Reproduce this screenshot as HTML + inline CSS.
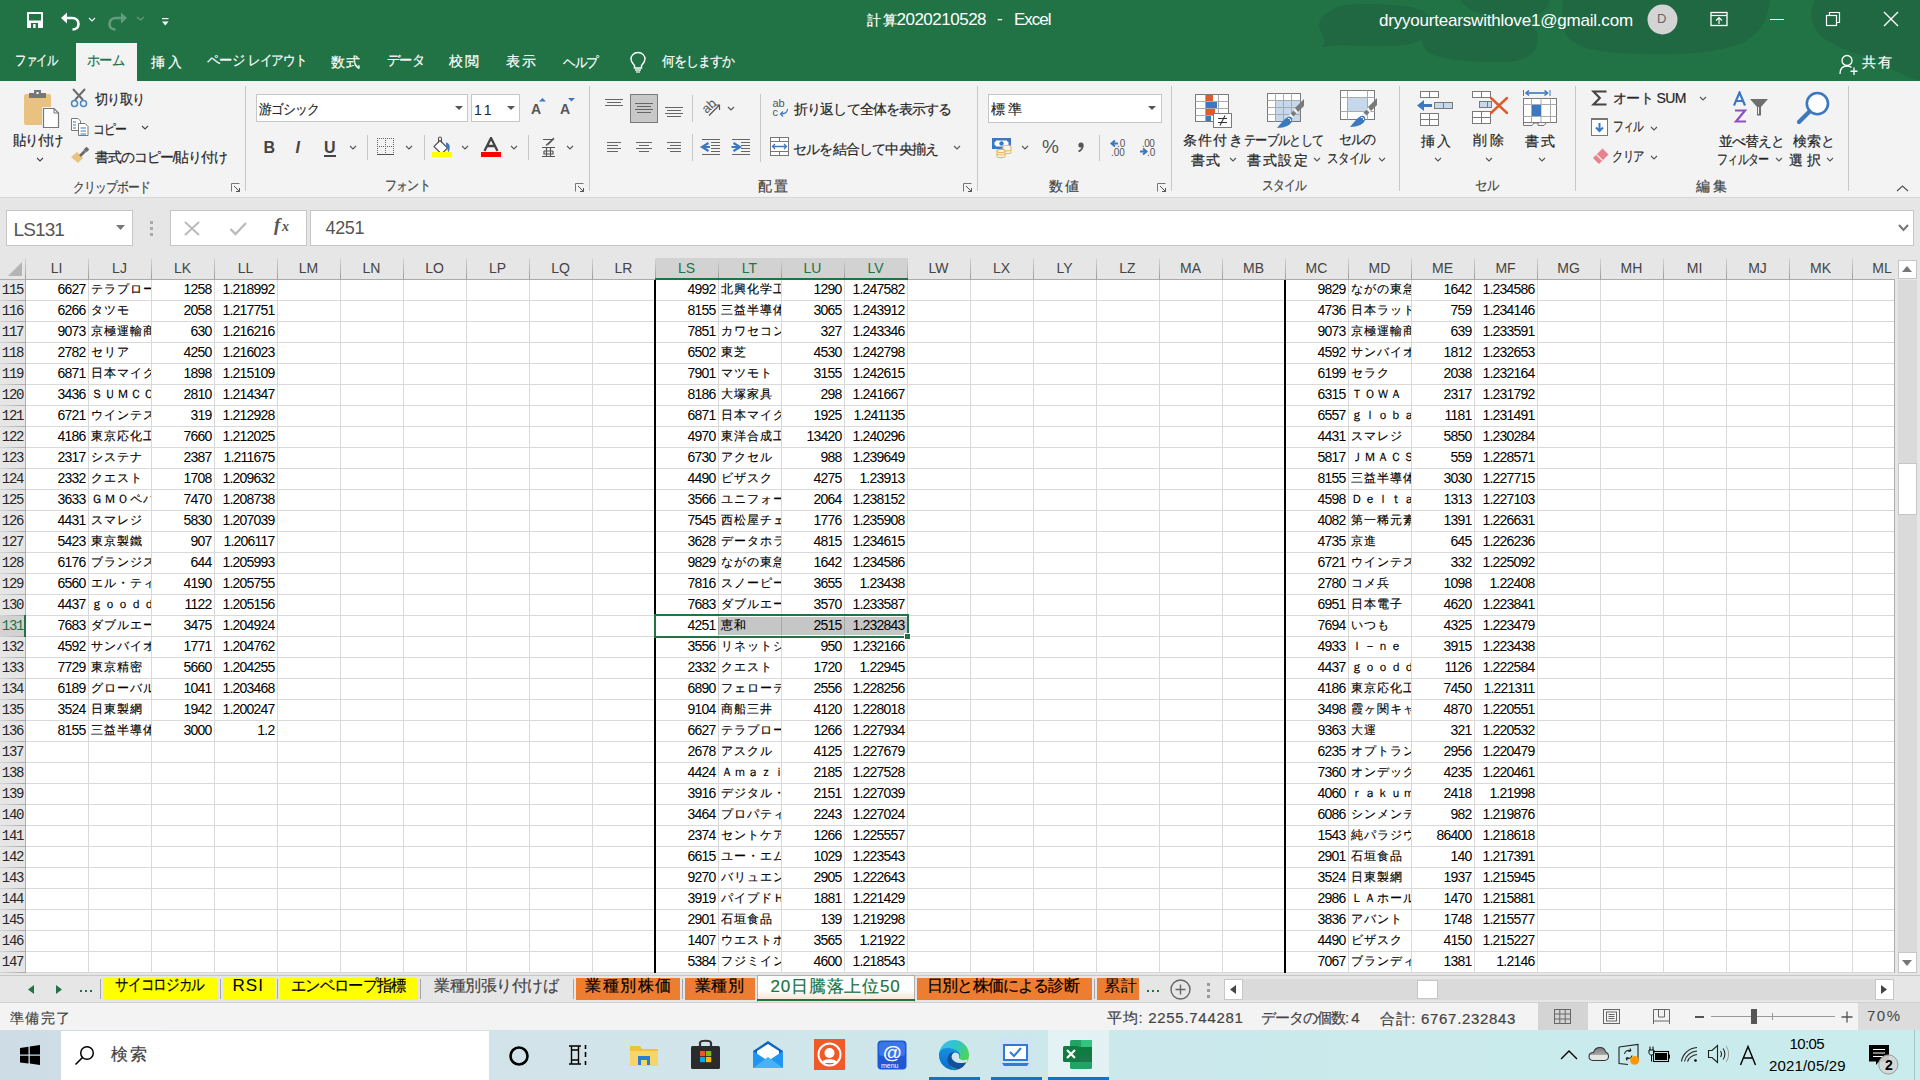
<!DOCTYPE html>
<html><head><meta charset='utf-8'><title>Excel</title>
<style>
html,body{margin:0;padding:0;width:1920px;height:1080px;overflow:hidden;background:#fff;font-family:"Liberation Sans",sans-serif;}
.c{position:absolute;white-space:nowrap;overflow:hidden;font-family:"Liberation Sans",sans-serif;}
</style></head><body>
<div style='position:absolute;left:0px;top:0px;width:1920px;height:81px;background:#217346'></div><svg style='position:absolute;left:1300px;top:0px;' width='620' height='81' viewBox='0 0 620 81'><g fill='#1f6842'><path d='M30,12 C35,4 60,3 90,5 C115,6 128,10 130,20 C132,32 125,42 105,45 C85,47 55,46 40,45 L22,47 C26,42 24,36 20,30 C17,22 22,15 30,12Z'/><path d='M125,25 C130,18 160,17 200,19 C228,21 240,28 238,40 C236,55 225,62 200,62 C170,62 140,60 128,52 C120,45 120,33 125,25Z'/><path d='M263,0 H470 C468,20 460,35 440,44 C410,55 360,56 320,53 C290,51 268,45 264,30 C262,20 262,8 263,0Z'/><path d='M160,0 H250 C248,10 240,16 220,17 C195,18 170,15 160,0Z'/><path d='M515,0 H620 V81 C600,75 580,62 560,55 C530,45 515,35 512,20 C511,12 512,5 515,0Z'/></g></svg><svg style='position:absolute;left:26px;top:11px;' width='18' height='18' viewBox='0 0 18 18'><rect x='1' y='1' width='16' height='16' rx='0.8' fill='#fff'/><rect x='3' y='3' width='12' height='6.5' fill='#217346'/><rect x='5' y='12' width='7' height='5' fill='#217346'/><rect x='7.2' y='13' width='2.4' height='4' fill='#fff'/></svg><svg style='position:absolute;left:59px;top:11px;' width='22' height='20' viewBox='0 0 22 20'><path d='M2,7 L8,1.5 V12.5Z' fill='#fff'/><path d='M7,7 H13 C17,7 19.5,9.5 19.5,13 C19.5,16.5 17,18.5 13.5,18.5' fill='none' stroke='#fff' stroke-width='2.6'/></svg><svg style='position:absolute;left:88.0px;top:17.0px;' width='8' height='5' viewBox='0 0 8 5'><polyline points='1,1 4.0,4 7,1' fill='none' stroke='#fff' stroke-width='1.1'/></svg><svg style='position:absolute;left:107px;top:11px;opacity:0.3' width='22' height='20' viewBox='0 0 22 20'><path d='M20,7 L14,1.5 V12.5Z' fill='#fff'/><path d='M15,7 H9 C5,7 2.5,9.5 2.5,13 C2.5,16.5 5,18.5 8.5,18.5' fill='none' stroke='#fff' stroke-width='2.6'/></svg><svg style='position:absolute;left:136px;top:16px;opacity:0.3' width='9' height='6' viewBox='0 0 9 6'><polyline points='1,1 4.5,4 8,1' fill='none' stroke='#fff' stroke-width='1.1'/></svg><svg style='position:absolute;left:161px;top:17px;' width='9' height='10' viewBox='0 0 9 10'><rect x='1' y='1' width='6.5' height='1.2' fill='#fff'/><path d='M1,4.5 H7.5 L4.25,8.5Z' fill='#fff'/></svg><svg style='position:absolute;left:1647px;top:4px;' width='31' height='31' viewBox='0 0 31 31'><circle cx='15.5' cy='15.5' r='15' fill='#d4d4d4'/></svg><svg style='position:absolute;left:1710px;top:11px;' width='19' height='16' viewBox='0 0 19 16'><rect x='1' y='1.5' width='16' height='13' fill='none' stroke='#fff' stroke-width='1.3'/><line x1='1' y1='4.5' x2='17' y2='4.5' stroke='#fff' stroke-width='1.2'/><path d='M9,6.5 V13 M6,9.5 L9,6.5 L12,9.5' fill='none' stroke='#fff' stroke-width='1.2'/></svg><div style='position:absolute;left:1770px;top:19px;width:14px;height:1px;background:#fff'></div><svg style='position:absolute;left:1825px;top:11px;' width='17' height='17' viewBox='0 0 17 17'><rect x='1.5' y='4.5' width='10' height='10' fill='none' stroke='#fff' stroke-width='1.2'/><path d='M4.5,4.5 V1.5 H14.5 V11.5 H11.5' fill='none' stroke='#fff' stroke-width='1.2'/></svg><svg style='position:absolute;left:1883px;top:11px;' width='16' height='16' viewBox='0 0 16 16'><path d='M1,1 L15,15 M15,1 L1,15' stroke='#fff' stroke-width='1.4'/></svg><div style='position:absolute;left:76px;top:43px;width:61px;height:38px;background:#f3f3f3'></div><svg style='position:absolute;left:629px;top:51px;' width='18' height='22' viewBox='0 0 18 22'><path d='M9,1.5 C4.5,1.5 2,5 2,8 C2,11 4,12.5 5.5,14.5 V17 H12.5 V14.5 C14,12.5 16,11 16,8 C16,5 13.5,1.5 9,1.5Z' fill='none' stroke='#fff' stroke-width='1.4'/><line x1='6' y1='19' x2='12' y2='19' stroke='#fff' stroke-width='1.4'/><line x1='7' y1='21' x2='11' y2='21' stroke='#fff' stroke-width='1.2'/></svg><svg style='position:absolute;left:1839px;top:54px;' width='20' height='22' viewBox='0 0 20 22'><circle cx='8' cy='6.5' r='5' fill='none' stroke='#fff' stroke-width='1.3'/><path d='M1,20 C1,14 4,12 8,12 C10,12 11.5,12.5 12.5,13.5' fill='none' stroke='#fff' stroke-width='1.3'/><path d='M15,13.5 V21 M11.5,17.25 H18.5' stroke='#fff' stroke-width='1.3'/></svg><div style='position:absolute;left:0px;top:81px;width:1920px;height:116px;background:#f3f3f3'></div><div style='position:absolute;left:0px;top:197px;width:1920px;height:1px;background:#d6d6d6'></div><div style='position:absolute;left:245px;top:86px;width:1px;height:105px;background:#c8c8c8'></div><div style='position:absolute;left:589px;top:86px;width:1px;height:105px;background:#c8c8c8'></div><div style='position:absolute;left:977px;top:86px;width:1px;height:105px;background:#c8c8c8'></div><div style='position:absolute;left:1171px;top:86px;width:1px;height:105px;background:#c8c8c8'></div><div style='position:absolute;left:1399px;top:86px;width:1px;height:105px;background:#c8c8c8'></div><div style='position:absolute;left:1575px;top:86px;width:1px;height:105px;background:#c8c8c8'></div><div style='position:absolute;left:1848px;top:86px;width:1px;height:105px;background:#c8c8c8'></div><svg style='position:absolute;left:231px;top:183px;' width='10' height='9' viewBox='0 0 10 9'><path d='M0.5,8.5 V0.5 H8.5' fill='none' stroke='#777' stroke-width='1'/><path d='M3,3 L8.5,8.5 M5,8.5 H8.5 V5' fill='none' stroke='#555' stroke-width='1'/></svg><svg style='position:absolute;left:575px;top:183px;' width='10' height='9' viewBox='0 0 10 9'><path d='M0.5,8.5 V0.5 H8.5' fill='none' stroke='#777' stroke-width='1'/><path d='M3,3 L8.5,8.5 M5,8.5 H8.5 V5' fill='none' stroke='#555' stroke-width='1'/></svg><svg style='position:absolute;left:963px;top:183px;' width='10' height='9' viewBox='0 0 10 9'><path d='M0.5,8.5 V0.5 H8.5' fill='none' stroke='#777' stroke-width='1'/><path d='M3,3 L8.5,8.5 M5,8.5 H8.5 V5' fill='none' stroke='#555' stroke-width='1'/></svg><svg style='position:absolute;left:1157px;top:183px;' width='10' height='9' viewBox='0 0 10 9'><path d='M0.5,8.5 V0.5 H8.5' fill='none' stroke='#777' stroke-width='1'/><path d='M3,3 L8.5,8.5 M5,8.5 H8.5 V5' fill='none' stroke='#555' stroke-width='1'/></svg><svg style='position:absolute;left:1896px;top:185px;' width='13' height='7' viewBox='0 0 13 7'><polyline points='1,6 6.5,1 12,6' fill='none' stroke='#555' stroke-width='1.2'/></svg><svg style='position:absolute;left:23px;top:89px;' width='37' height='40' viewBox='0 0 37 40'><rect x='1' y='5' width='27' height='31' rx='2' fill='#eac27f'/><rect x='6' y='4' width='17' height='5' fill='#777'/><rect x='11' y='1' width='7' height='5' fill='#777'/><rect x='13.5' y='3' width='2' height='2' fill='#fff'/><rect x='19' y='18' width='18' height='21' fill='#f3f3f3'/><path d='M20.5,19.5 H31 L35.5,24 V38.5 H20.5Z' fill='#fff' stroke='#777' stroke-width='1.2'/><path d='M31,19.5 V24 H35.5' fill='none' stroke='#777' stroke-width='1'/></svg><svg style='position:absolute;left:36.0px;top:156.5px;' width='8' height='5' viewBox='0 0 8 5'><polyline points='1,1 4.0,4 7,1' fill='none' stroke='#444' stroke-width='1.1'/></svg><svg style='position:absolute;left:70px;top:88px;' width='19' height='20' viewBox='0 0 19 20'><path d='M3,1 L13,12 M15,1 L5,12' stroke='#6b6b6b' stroke-width='2'/><circle cx='4.5' cy='15.5' r='3' fill='none' stroke='#4a86c8' stroke-width='1.5'/><circle cx='13.5' cy='15.5' r='3' fill='none' stroke='#4a86c8' stroke-width='1.5'/></svg><svg style='position:absolute;left:70px;top:117px;' width='20' height='20' viewBox='0 0 20 20'><path d='M1.5,1.5 H8 L10.5,4 V13.5 H1.5Z' fill='#fff' stroke='#777' stroke-width='1'/><path d='M8.5,6.5 H15 L18,9.5 V18.5 H8.5Z' fill='#fff' stroke='#777' stroke-width='1'/><path d='M3,5 H6 M3,8 H6 M3,11 H6 M10.5,11 H16 M10.5,14 H16 M10.5,17 H16' stroke='#3c78c0' stroke-width='1'/></svg><svg style='position:absolute;left:140.5px;top:125.0px;' width='8' height='5' viewBox='0 0 8 5'><polyline points='1,1 4.0,4 7,1' fill='none' stroke='#444' stroke-width='1.1'/></svg><svg style='position:absolute;left:70px;top:147px;' width='20' height='18' viewBox='0 0 20 18'><path d='M1,10 L8,16 L13,11 L7,5Z' fill='#eac27f'/><path d='M9,8 L14,3 L16,5 L11,10Z' fill='#6b6b6b'/><rect x='14.5' y='0.5' width='4' height='4' fill='#6b6b6b' transform='rotate(45 16.5 2.5)'/></svg><div style='position:absolute;left:256px;top:94px;width:212px;height:28px;background:#fff;border:1px solid #c6c6c6;box-sizing:border-box'></div><svg style='position:absolute;left:455px;top:106px;' width='8' height='5' viewBox='0 0 8 5'><path d='M0,0 H8 L4,4Z' fill='#555'/></svg><div style='position:absolute;left:471px;top:94px;width:49px;height:28px;background:#fff;border:1px solid #c6c6c6;box-sizing:border-box'></div><svg style='position:absolute;left:507px;top:106px;' width='8' height='5' viewBox='0 0 8 5'><path d='M0,0 H8 L4,4Z' fill='#555'/></svg><svg style='position:absolute;left:539px;top:98px;' width='7' height='4' viewBox='0 0 7 4'><path d='M0,3.5 H7 L3.5,0Z' fill='#3c78c0'/></svg><svg style='position:absolute;left:568px;top:98px;' width='7' height='4' viewBox='0 0 7 4'><path d='M0,0 H7 L3.5,3.5Z' fill='#3c78c0'/></svg><div style='position:absolute;left:367px;top:135px;width:1px;height:25px;background:#c8c8c8'></div><div style='position:absolute;left:424px;top:135px;width:1px;height:25px;background:#c8c8c8'></div><div style='position:absolute;left:528px;top:135px;width:1px;height:25px;background:#c8c8c8'></div><div style='position:absolute;left:324px;top:155px;width:12px;height:1.5px;background:#444'></div><svg style='position:absolute;left:349.0px;top:144.5px;' width='8' height='5' viewBox='0 0 8 5'><polyline points='1,1 4.0,4 7,1' fill='none' stroke='#555' stroke-width='1.1'/></svg><svg style='position:absolute;left:0;top:0' width='600' height='200'><g fill='#666'><rect x='377' y='138' width='1' height='1'/><rect x='377' y='146' width='1' height='1'/><rect x='379' y='138' width='1' height='1'/><rect x='379' y='146' width='1' height='1'/><rect x='381' y='138' width='1' height='1'/><rect x='381' y='146' width='1' height='1'/><rect x='383' y='138' width='1' height='1'/><rect x='383' y='146' width='1' height='1'/><rect x='385' y='138' width='1' height='1'/><rect x='385' y='146' width='1' height='1'/><rect x='387' y='138' width='1' height='1'/><rect x='387' y='146' width='1' height='1'/><rect x='389' y='138' width='1' height='1'/><rect x='389' y='146' width='1' height='1'/><rect x='391' y='138' width='1' height='1'/><rect x='391' y='146' width='1' height='1'/><rect x='393' y='138' width='1' height='1'/><rect x='393' y='146' width='1' height='1'/><rect x='377' y='138' width='1' height='1'/><rect x='385' y='138' width='1' height='1'/><rect x='393' y='138' width='1' height='1'/><rect x='377' y='140' width='1' height='1'/><rect x='385' y='140' width='1' height='1'/><rect x='393' y='140' width='1' height='1'/><rect x='377' y='142' width='1' height='1'/><rect x='385' y='142' width='1' height='1'/><rect x='393' y='142' width='1' height='1'/><rect x='377' y='144' width='1' height='1'/><rect x='385' y='144' width='1' height='1'/><rect x='393' y='144' width='1' height='1'/><rect x='377' y='146' width='1' height='1'/><rect x='385' y='146' width='1' height='1'/><rect x='393' y='146' width='1' height='1'/><rect x='377' y='148' width='1' height='1'/><rect x='385' y='148' width='1' height='1'/><rect x='393' y='148' width='1' height='1'/><rect x='377' y='150' width='1' height='1'/><rect x='385' y='150' width='1' height='1'/><rect x='393' y='150' width='1' height='1'/><rect x='377' y='152' width='1' height='1'/><rect x='385' y='152' width='1' height='1'/><rect x='393' y='152' width='1' height='1'/></g><rect x='377' y='154' width='17' height='1' fill='#555'/></svg><svg style='position:absolute;left:405.0px;top:144.5px;' width='8' height='5' viewBox='0 0 8 5'><polyline points='1,1 4.0,4 7,1' fill='none' stroke='#555' stroke-width='1.1'/></svg><svg style='position:absolute;left:430px;top:135px;' width='24' height='24' viewBox='0 0 24 24'><path d='M10,5.5 L17.5,13 L11.5,19 L4,11.5Z' fill='#fff' stroke='#555' stroke-width='1.1' stroke-linejoin='round'/><path d='M8.5,7.5 V3.5 C8.5,1.5 11.5,1.5 11.5,3.5 V8' fill='none' stroke='#555' stroke-width='1.1'/><path d='M16,7.5 C19,8 20.5,10.5 19.5,14.5 L18.5,17.5 C17.5,15 17,12 16,10Z' fill='#3c78c0'/><rect x='2' y='17' width='20' height='5' fill='#ffff00'/></svg><svg style='position:absolute;left:461.0px;top:144.5px;' width='8' height='5' viewBox='0 0 8 5'><polyline points='1,1 4.0,4 7,1' fill='none' stroke='#555' stroke-width='1.1'/></svg><svg style='position:absolute;left:483px;top:137px;' width='16' height='15' viewBox='0 0 16 15'><path d='M1.5,14 L8,1 L14.5,14 M4,9 H12' fill='none' stroke='#444' stroke-width='2.3' stroke-linejoin='miter'/></svg><div style='position:absolute;left:481px;top:152px;width:20px;height:4.5px;background:#ff0000'></div><svg style='position:absolute;left:510.0px;top:144.5px;' width='8' height='5' viewBox='0 0 8 5'><polyline points='1,1 4.0,4 7,1' fill='none' stroke='#555' stroke-width='1.1'/></svg><svg style='position:absolute;left:540px;top:136px;' width='18' height='22' viewBox='0 0 18 22'><path d='M3,3.5 H13 L8,8.5 M6,9.5 L14,2' fill='none' stroke='#555' stroke-width='1.2'/><path d='M2,11.5 H15 M4,15 H13 M2,20.5 H15 M6.5,11.5 V20.5 M10.5,11.5 V20.5 M4,15 V18 H13 V15' fill='none' stroke='#555' stroke-width='1.2'/></svg><svg style='position:absolute;left:566.0px;top:144.5px;' width='8' height='5' viewBox='0 0 8 5'><polyline points='1,1 4.0,4 7,1' fill='none' stroke='#555' stroke-width='1.1'/></svg><div style='position:absolute;left:630px;top:94px;width:28px;height:29px;background:#c8c8c8;border:1px solid #7a7a7a;box-sizing:border-box'></div><svg style='position:absolute;left:0;top:0' width='1000' height='200'><rect x='605' y='99' width='18' height='1' fill='#666'/><rect x='607' y='102' width='14' height='1' fill='#666'/><rect x='605' y='105' width='18' height='1' fill='#666'/><rect x='635' y='103' width='18' height='1' fill='#666'/><rect x='637' y='106' width='14' height='1' fill='#666'/><rect x='635' y='109' width='18' height='1' fill='#666'/><rect x='637' y='112' width='14' height='1' fill='#666'/><rect x='665' y='107' width='18' height='1' fill='#666'/><rect x='667' y='110' width='14' height='1' fill='#666'/><rect x='665' y='113' width='18' height='1' fill='#666'/><rect x='667' y='116' width='14' height='1' fill='#666'/><rect x='607' y='142' width='14' height='1' fill='#666'/><rect x='607' y='145' width='11' height='1' fill='#666'/><rect x='607' y='148' width='14' height='1' fill='#666'/><rect x='607' y='151' width='11' height='1' fill='#666'/><rect x='636' y='142' width='16' height='1' fill='#666'/><rect x='639' y='145' width='10' height='1' fill='#666'/><rect x='636' y='148' width='16' height='1' fill='#666'/><rect x='639' y='151' width='10' height='1' fill='#666'/><rect x='667' y='142' width='14' height='1' fill='#666'/><rect x='670' y='145' width='11' height='1' fill='#666'/><rect x='667' y='148' width='14' height='1' fill='#666'/><rect x='670' y='151' width='11' height='1' fill='#666'/><rect x='702' y='139' width='18' height='1' fill='#666'/><rect x='711' y='142' width='9' height='1' fill='#666'/><rect x='711' y='145' width='9' height='1' fill='#666'/><rect x='711' y='148' width='9' height='1' fill='#666'/><rect x='711' y='151' width='9' height='1' fill='#666'/><rect x='702' y='154' width='18' height='1' fill='#666'/><rect x='732' y='139' width='18' height='1' fill='#666'/><rect x='741' y='142' width='9' height='1' fill='#666'/><rect x='741' y='145' width='9' height='1' fill='#666'/><rect x='741' y='148' width='9' height='1' fill='#666'/><rect x='741' y='151' width='9' height='1' fill='#666'/><rect x='732' y='154' width='18' height='1' fill='#666'/><path d='M708.5,143 L702,147 L708.5,151 M702.5,147 H710' fill='none' stroke='#3c78c0' stroke-width='2.2' stroke-linejoin='miter'/><path d='M733.5,143 L740,147 L733.5,151 M731.5,147 H739.5' fill='none' stroke='#3c78c0' stroke-width='2.2' stroke-linejoin='miter'/><rect x='692' y='95' width='1' height='27' fill='#c8c8c8'/><rect x='692' y='134' width='1' height='27' fill='#c8c8c8'/><rect x='760' y='94' width='1' height='68' fill='#c8c8c8'/><g transform='rotate(-42 709 105)'><text x='701' y='110' font-size='13' font-family='Liberation Sans' fill='#555'>ab</text></g><path d='M709,115.5 L719.5,105 M714.5,105 H719.5 V110' fill='none' stroke='#555' stroke-width='1.2'/></svg><svg style='position:absolute;left:727.0px;top:106.0px;' width='8' height='5' viewBox='0 0 8 5'><polyline points='1,1 4.0,4 7,1' fill='none' stroke='#555' stroke-width='1.1'/></svg><svg style='position:absolute;left:771px;top:97px;' width='20' height='22' viewBox='0 0 20 22'><text x='1.5' y='10' font-size='11' font-family='Liberation Sans' fill='#555'>ab</text><text x='1.5' y='19' font-size='11' font-family='Liberation Sans' fill='#555'>c</text><path d='M16.5,12 C16.5,16 14,17 9.5,17 M12,14.5 L9.5,17 L12,19.5' fill='none' stroke='#3c78c0' stroke-width='1.2'/></svg><svg style='position:absolute;left:769px;top:136px;' width='21' height='21' viewBox='0 0 21 21'><rect x='1.5' y='1.5' width='18' height='18' fill='#fff' stroke='#777' stroke-width='1'/><path d='M1.5,5.5 H19.5 M1.5,15.5 H19.5 M10.5,1.5 V5.5 M10.5,15.5 V19.5' stroke='#777' stroke-width='1'/><path d='M3.5,10.5 H17.5 M6,8 L3.5,10.5 L6,13 M15,8 L17.5,10.5 L15,13' fill='none' stroke='#3c78c0' stroke-width='1.3'/></svg><svg style='position:absolute;left:953.0px;top:144.5px;' width='8' height='5' viewBox='0 0 8 5'><polyline points='1,1 4.0,4 7,1' fill='none' stroke='#555' stroke-width='1.1'/></svg><div style='position:absolute;left:988px;top:94px;width:174px;height:29px;background:#fff;border:1px solid #c6c6c6;box-sizing:border-box'></div><svg style='position:absolute;left:1148px;top:106px;' width='8' height='5' viewBox='0 0 8 5'><path d='M0,0 H8 L4,4Z' fill='#555'/></svg><svg style='position:absolute;left:990px;top:136px;' width='24' height='24' viewBox='0 0 24 24'><rect x='2' y='2' width='19' height='11' fill='#3c78c0'/><path d='M4.5,6 C6,6 6,4.5 6,4.5 H17 C17,4.5 17,6 18.5,6 V9 C17,9 17,10.5 17,10.5 H6 C6,10.5 6,9 4.5,9Z' fill='#fff'/><circle cx='11.5' cy='7.5' r='2.2' fill='#3c78c0'/><g fill='#f3f3f3' stroke='#e8b866' stroke-width='1.1'><ellipse cx='17' cy='11' rx='4' ry='1.7'/><path d='M13,11 V16.5 C13,18 21,18 21,16.5 V11'/><path d='M13,13.7 C13,15.2 21,15.2 21,13.7' fill='none'/><path d='M7,15 C7,13.5 15,13.5 15,15 V20.5 C15,22 7,22 7,20.5Z'/><ellipse cx='11' cy='15' rx='4' ry='1.6'/><path d='M7,17.8 C7,19.3 15,19.3 15,17.8' fill='none'/></g></svg><svg style='position:absolute;left:1021.0px;top:145.0px;' width='8' height='5' viewBox='0 0 8 5'><polyline points='1,1 4.0,4 7,1' fill='none' stroke='#555' stroke-width='1.1'/></svg><div style='position:absolute;left:1099px;top:135px;width:1px;height:26px;background:#c8c8c8'></div><svg style='position:absolute;left:1076px;top:142px;' width='9' height='10' viewBox='0 0 9 10'><circle cx='5' cy='3' r='2.6' fill='#555'/><path d='M6.5,3.5 C7,6 5,8.5 2.5,9.5' fill='none' stroke='#555' stroke-width='1.8'/></svg><svg style='position:absolute;left:1109px;top:139px;' width='10' height='9' viewBox='0 0 10 9'><path d='M9,4.5 H3 M6,1.5 L2.5,4.5 L6,7.5' fill='none' stroke='#3c78c0' stroke-width='2'/></svg><svg style='position:absolute;left:1139px;top:147px;' width='10' height='9' viewBox='0 0 10 9'><path d='M1,4.5 H7 M4,1.5 L7.5,4.5 L4,7.5' fill='none' stroke='#3c78c0' stroke-width='2'/></svg><svg style='position:absolute;left:1185px;top:85px;' width='210' height='45' viewBox='0 0 210 45'><g fill='#fff' stroke='#7a7a7a' stroke-width='1'><rect x='10.5' y='9.5' width='33' height='27'/><rect x='82.5' y='8.5' width='33' height='28'/><rect x='155.5' y='5.5' width='34' height='29'/></g><rect x='21' y='10' width='7' height='6' fill='#e05a2b'/><rect x='21' y='17' width='11' height='6' fill='#3c78c0'/><rect x='21' y='24' width='9' height='6' fill='#e05a2b'/><rect x='21' y='31' width='5' height='5' fill='#3c78c0'/><path d='M10.5,16.5 H43.5 M10.5,23.5 H43.5 M10.5,30.5 H43.5 M20.5,9.5 V36.5 M33.5,9.5 V36.5' stroke='#aaa' stroke-width='1'/><rect x='28.5' y='28.5' width='18' height='14' fill='#fff' stroke='#7a7a7a'/><path d='M33,33.5 H42 M33,37.5 H42 M40,30.5 L35,40.5' stroke='#333' stroke-width='1.1'/><rect x='91' y='16' width='24' height='20' fill='#c5d8ec'/><path d='M82.5,15.5 H115.5 M82.5,22.5 H115.5 M82.5,29.5 H115.5 M90.5,8.5 V36.5 M98.5,8.5 V36.5 M106.5,8.5 V36.5' stroke='#aaa' stroke-width='1'/><rect x='163' y='13' width='19' height='13' fill='#c5d8ec'/><path d='M155.5,12.5 H189.5 M155.5,26.5 H189.5 M162.5,5.5 V34.5 M182.5,5.5 V34.5' stroke='#aaa' stroke-width='1'/><g id='br'><path d='M104,30 L112,22 L115,25 L107,33Z' fill='#f3f3f3'/><path d='M110,23 L119,14 L119,21 L113,27Z' fill='#7a7a7a'/><path d='M105.5,28.5 L108.5,25.5 L111.5,28.5 L108.5,31.5Z' fill='#7a7a7a'/><path d='M92,43 C96,38 99,34 103,32 C106,31 108,33 107,36 C106,40 100,43 92,43Z' fill='#3c78c0'/><path d='M103,33.5 C105,33 106,34.5 105.5,36' fill='none' stroke='#fff' stroke-width='1'/></g><use href='#br' x='73' y='-1'/></svg><svg style='position:absolute;left:1229.0px;top:156.5px;' width='8' height='5' viewBox='0 0 8 5'><polyline points='1,1 4.0,4 7,1' fill='none' stroke='#555' stroke-width='1.1'/></svg><svg style='position:absolute;left:1313.0px;top:156.5px;' width='8' height='5' viewBox='0 0 8 5'><polyline points='1,1 4.0,4 7,1' fill='none' stroke='#555' stroke-width='1.1'/></svg><svg style='position:absolute;left:1378.0px;top:156.5px;' width='8' height='5' viewBox='0 0 8 5'><polyline points='1,1 4.0,4 7,1' fill='none' stroke='#555' stroke-width='1.1'/></svg><svg style='position:absolute;left:1405px;top:85px;' width='160' height='45' viewBox='0 0 160 45'><g fill='#fff' stroke='#7a7a7a' stroke-width='1'><rect x='15.5' y='6.5' width='18' height='6'/><path d='M24.5,6.5 V12.5'/><rect x='29.5' y='17.5' width='18' height='6' fill='#c5d8ec'/><path d='M38.5,17.5 V23.5'/><rect x='15.5' y='28.5' width='18' height='12'/><path d='M24.5,28.5 V40.5 M15.5,34.5 H33.5'/><rect x='67.5' y='6.5' width='18' height='6'/><path d='M76.5,6.5 V12.5'/><rect x='74.5' y='16.5' width='12' height='6' fill='#c5d8ec'/><path d='M82.5,16.5 V22.5'/><rect x='67.5' y='26.5' width='18' height='12'/><path d='M76.5,26.5 V38.5 M67.5,32.5 H85.5'/><rect x='118.5' y='13.5' width='33' height='24'/><path d='M126.5,13.5 V37.5 M136,13.5 V37.5 M145.5,13.5 V37.5 M118.5,19.5 H151.5 M118.5,31.5 H151.5' stroke='#aaa'/><path d='M118.5,37.5 V40.5 H127 L129,38 H133 V40.5 H139 L141.5,37.5' fill='none'/></g><path d='M12,20.5 L19,15 V26Z' fill='#3c78c0'/><rect x='18' y='19' width='9' height='3' fill='#3c78c0'/><path d='M86,13 L102,28 M102,13 L86,28' stroke='#e05a2b' stroke-width='2.4' stroke-linecap='round'/><rect x='127' y='20' width='9' height='11' fill='#3c78c0'/><path d='M118.5,5 V11 M145,5 V11' stroke='#3c78c0' stroke-width='1'/><path d='M121,8 H142.5' stroke='#3c78c0' stroke-width='1.6'/><path d='M124,5.5 L121,8 L124,10.5 M139.5,5.5 L142.5,8 L139.5,10.5' fill='none' stroke='#3c78c0' stroke-width='1.6'/></svg><svg style='position:absolute;left:1434.0px;top:156.5px;' width='8' height='5' viewBox='0 0 8 5'><polyline points='1,1 4.0,4 7,1' fill='none' stroke='#555' stroke-width='1.1'/></svg><svg style='position:absolute;left:1485.0px;top:156.5px;' width='8' height='5' viewBox='0 0 8 5'><polyline points='1,1 4.0,4 7,1' fill='none' stroke='#555' stroke-width='1.1'/></svg><svg style='position:absolute;left:1538.0px;top:156.5px;' width='8' height='5' viewBox='0 0 8 5'><polyline points='1,1 4.0,4 7,1' fill='none' stroke='#555' stroke-width='1.1'/></svg><svg style='position:absolute;left:1590px;top:89px;' width='19' height='18' viewBox='0 0 19 18'><path d='M16.5,2.5 H3.5 L9.8,9 L3.5,15.5 H16.5' fill='none' stroke='#444' stroke-width='2.1' stroke-miterlimit='10'/></svg><svg style='position:absolute;left:1699.0px;top:95.5px;' width='8' height='5' viewBox='0 0 8 5'><polyline points='1,1 4.0,4 7,1' fill='none' stroke='#555' stroke-width='1.1'/></svg><svg style='position:absolute;left:1590px;top:117px;' width='19' height='20' viewBox='0 0 19 20'><rect x='1.5' y='2.5' width='16' height='16' fill='#fff' stroke='#777'/><rect x='1' y='1' width='17' height='2' fill='#777'/><path d='M9.5,6 V14 M6,10.5 L9.5,14 L13,10.5' fill='none' stroke='#3c78c0' stroke-width='2'/></svg><svg style='position:absolute;left:1650.0px;top:125.5px;' width='8' height='5' viewBox='0 0 8 5'><polyline points='1,1 4.0,4 7,1' fill='none' stroke='#555' stroke-width='1.1'/></svg><svg style='position:absolute;left:1591px;top:147px;' width='19' height='19' viewBox='0 0 19 19'><path d='M11.5,1.5 L17.5,7.5 L8,17 L2,11Z' fill='#e8828e'/><path d='M5.5,7.5 L11.5,13.5' stroke='#f3f3f3' stroke-width='1.2'/><path d='M2,11 L8,17 L5.5,19 L0.5,14Z' fill='#f3f3f3' opacity='0'/></svg><svg style='position:absolute;left:1650.0px;top:154.5px;' width='8' height='5' viewBox='0 0 8 5'><polyline points='1,1 4.0,4 7,1' fill='none' stroke='#555' stroke-width='1.1'/></svg><svg style='position:absolute;left:1732px;top:91px;' width='40' height='34' viewBox='0 0 40 34'><path d='M2,14.5 L7.5,1.5 L13,14.5 M4,10 H11' fill='none' stroke='#3c78c0' stroke-width='2.2'/><path d='M3,19.5 H13 L4,30.5 H14' fill='none' stroke='#8f4fc4' stroke-width='2.2'/><path d='M18,8 H36 L29,16 V24.5 H25 V16Z' fill='#6e6e6e'/><path d='M26.5,16 V23' stroke='#f3f3f3' stroke-width='1'/></svg><svg style='position:absolute;left:1775.0px;top:157.0px;' width='8' height='5' viewBox='0 0 8 5'><polyline points='1,1 4.0,4 7,1' fill='none' stroke='#555' stroke-width='1.1'/></svg><svg style='position:absolute;left:1795px;top:90px;' width='37' height='37' viewBox='0 0 37 37'><circle cx='22.4' cy='13.6' r='10.6' fill='#fff' stroke='#3c78c0' stroke-width='2.6'/><path d='M14.5,21.5 L4,32' stroke='#3c78c0' stroke-width='4.2' stroke-linecap='round'/></svg><svg style='position:absolute;left:1826.0px;top:157.0px;' width='8' height='5' viewBox='0 0 8 5'><polyline points='1,1 4.0,4 7,1' fill='none' stroke='#555' stroke-width='1.1'/></svg><div style='position:absolute;left:0px;top:198px;width:1920px;height:60px;background:#e6e6e6'></div><div style='position:absolute;left:6px;top:210px;width:127px;height:36px;background:#fff;border:1px solid #c6c6c6;box-sizing:border-box'></div><svg style='position:absolute;left:116px;top:225px;' width='10' height='6' viewBox='0 0 10 6'><path d='M0,0 H9 L4.5,5Z' fill='#777'/></svg><div style='position:absolute;left:150px;top:221px;width:3px;height:3px;background:#aaa'></div><div style='position:absolute;left:150px;top:227px;width:3px;height:3px;background:#aaa'></div><div style='position:absolute;left:150px;top:233px;width:3px;height:3px;background:#aaa'></div><div style='position:absolute;left:170px;top:210px;width:137px;height:36px;background:#fff;border:1px solid #c6c6c6;box-sizing:border-box'></div><svg style='position:absolute;left:184px;top:221px;' width='17' height='15' viewBox='0 0 17 15'><path d='M1,1 L15,14 M15,1 L1,14' stroke='#bbb' stroke-width='2'/></svg><svg style='position:absolute;left:229px;top:221px;' width='19' height='15' viewBox='0 0 19 15'><path d='M1.5,8 L6.5,13 L17,2' fill='none' stroke='#bbb' stroke-width='2.4'/></svg><div style='position:absolute;left:310px;top:210px;width:1604px;height:36px;background:#fff;border:1px solid #c6c6c6;box-sizing:border-box'></div><svg style='position:absolute;left:1898px;top:224px;' width='11' height='8' viewBox='0 0 11 8'><path d='M1,1 L5.5,6 L10,1' fill='none' stroke='#777' stroke-width='2'/></svg><div style='position:absolute;left:0px;top:258px;width:1897px;height:21px;background:#e6e6e6'></div><div style='position:absolute;left:0px;top:279px;width:25px;height:694px;background:#e6e6e6'></div><svg style='position:absolute;left:8px;top:262px;' width='15' height='15' viewBox='0 0 15 15'><path d='M14,0 V14 H0Z' fill='#b4b4b4'/></svg><div style='position:absolute;left:655px;top:258px;width:252px;height:21px;background:#d2d2d2'></div><div style='position:absolute;left:26px;top:280px;width:1869px;height:693px;background:#fff'></div><svg style='position:absolute;left:0;top:0' width='1920' height='1080'><defs><linearGradient id='rg' x1='0' y1='0' x2='1' y2='0'><stop offset='0' stop-color='#d6d6d6'/><stop offset='1' stop-color='#a9a9a9'/></linearGradient></defs><rect x='25' y='280' width='1' height='693' fill='#d9d9d9'/><rect x='88' y='280' width='1' height='693' fill='#d9d9d9'/><rect x='151' y='280' width='1' height='693' fill='#d9d9d9'/><rect x='214' y='280' width='1' height='693' fill='#d9d9d9'/><rect x='277' y='280' width='1' height='693' fill='#d9d9d9'/><rect x='340' y='280' width='1' height='693' fill='#d9d9d9'/><rect x='403' y='280' width='1' height='693' fill='#d9d9d9'/><rect x='466' y='280' width='1' height='693' fill='#d9d9d9'/><rect x='529' y='280' width='1' height='693' fill='#d9d9d9'/><rect x='592' y='280' width='1' height='693' fill='#d9d9d9'/><rect x='655' y='280' width='1' height='693' fill='#d9d9d9'/><rect x='718' y='280' width='1' height='693' fill='#d9d9d9'/><rect x='781' y='280' width='1' height='693' fill='#d9d9d9'/><rect x='844' y='280' width='1' height='693' fill='#d9d9d9'/><rect x='907' y='280' width='1' height='693' fill='#d9d9d9'/><rect x='970' y='280' width='1' height='693' fill='#d9d9d9'/><rect x='1033' y='280' width='1' height='693' fill='#d9d9d9'/><rect x='1096' y='280' width='1' height='693' fill='#d9d9d9'/><rect x='1159' y='280' width='1' height='693' fill='#d9d9d9'/><rect x='1222' y='280' width='1' height='693' fill='#d9d9d9'/><rect x='1285' y='280' width='1' height='693' fill='#d9d9d9'/><rect x='1348' y='280' width='1' height='693' fill='#d9d9d9'/><rect x='1411' y='280' width='1' height='693' fill='#d9d9d9'/><rect x='1474' y='280' width='1' height='693' fill='#d9d9d9'/><rect x='1537' y='280' width='1' height='693' fill='#d9d9d9'/><rect x='1600' y='280' width='1' height='693' fill='#d9d9d9'/><rect x='1663' y='280' width='1' height='693' fill='#d9d9d9'/><rect x='1726' y='280' width='1' height='693' fill='#d9d9d9'/><rect x='1789' y='280' width='1' height='693' fill='#d9d9d9'/><rect x='1852' y='280' width='1' height='693' fill='#d9d9d9'/><rect x='26' y='300' width='1869' height='1' fill='#d9d9d9'/><rect x='0' y='300' width='25' height='1' fill='url(#rg)'/><rect x='26' y='321' width='1869' height='1' fill='#d9d9d9'/><rect x='0' y='321' width='25' height='1' fill='url(#rg)'/><rect x='26' y='342' width='1869' height='1' fill='#d9d9d9'/><rect x='0' y='342' width='25' height='1' fill='url(#rg)'/><rect x='26' y='363' width='1869' height='1' fill='#d9d9d9'/><rect x='0' y='363' width='25' height='1' fill='url(#rg)'/><rect x='26' y='384' width='1869' height='1' fill='#d9d9d9'/><rect x='0' y='384' width='25' height='1' fill='url(#rg)'/><rect x='26' y='405' width='1869' height='1' fill='#d9d9d9'/><rect x='0' y='405' width='25' height='1' fill='url(#rg)'/><rect x='26' y='426' width='1869' height='1' fill='#d9d9d9'/><rect x='0' y='426' width='25' height='1' fill='url(#rg)'/><rect x='26' y='447' width='1869' height='1' fill='#d9d9d9'/><rect x='0' y='447' width='25' height='1' fill='url(#rg)'/><rect x='26' y='468' width='1869' height='1' fill='#d9d9d9'/><rect x='0' y='468' width='25' height='1' fill='url(#rg)'/><rect x='26' y='489' width='1869' height='1' fill='#d9d9d9'/><rect x='0' y='489' width='25' height='1' fill='url(#rg)'/><rect x='26' y='510' width='1869' height='1' fill='#d9d9d9'/><rect x='0' y='510' width='25' height='1' fill='url(#rg)'/><rect x='26' y='531' width='1869' height='1' fill='#d9d9d9'/><rect x='0' y='531' width='25' height='1' fill='url(#rg)'/><rect x='26' y='552' width='1869' height='1' fill='#d9d9d9'/><rect x='0' y='552' width='25' height='1' fill='url(#rg)'/><rect x='26' y='573' width='1869' height='1' fill='#d9d9d9'/><rect x='0' y='573' width='25' height='1' fill='url(#rg)'/><rect x='26' y='594' width='1869' height='1' fill='#d9d9d9'/><rect x='0' y='594' width='25' height='1' fill='url(#rg)'/><rect x='26' y='615' width='1869' height='1' fill='#d9d9d9'/><rect x='0' y='615' width='25' height='1' fill='url(#rg)'/><rect x='26' y='636' width='1869' height='1' fill='#d9d9d9'/><rect x='0' y='636' width='25' height='1' fill='url(#rg)'/><rect x='26' y='657' width='1869' height='1' fill='#d9d9d9'/><rect x='0' y='657' width='25' height='1' fill='url(#rg)'/><rect x='26' y='678' width='1869' height='1' fill='#d9d9d9'/><rect x='0' y='678' width='25' height='1' fill='url(#rg)'/><rect x='26' y='699' width='1869' height='1' fill='#d9d9d9'/><rect x='0' y='699' width='25' height='1' fill='url(#rg)'/><rect x='26' y='720' width='1869' height='1' fill='#d9d9d9'/><rect x='0' y='720' width='25' height='1' fill='url(#rg)'/><rect x='26' y='741' width='1869' height='1' fill='#d9d9d9'/><rect x='0' y='741' width='25' height='1' fill='url(#rg)'/><rect x='26' y='762' width='1869' height='1' fill='#d9d9d9'/><rect x='0' y='762' width='25' height='1' fill='url(#rg)'/><rect x='26' y='783' width='1869' height='1' fill='#d9d9d9'/><rect x='0' y='783' width='25' height='1' fill='url(#rg)'/><rect x='26' y='804' width='1869' height='1' fill='#d9d9d9'/><rect x='0' y='804' width='25' height='1' fill='url(#rg)'/><rect x='26' y='825' width='1869' height='1' fill='#d9d9d9'/><rect x='0' y='825' width='25' height='1' fill='url(#rg)'/><rect x='26' y='846' width='1869' height='1' fill='#d9d9d9'/><rect x='0' y='846' width='25' height='1' fill='url(#rg)'/><rect x='26' y='867' width='1869' height='1' fill='#d9d9d9'/><rect x='0' y='867' width='25' height='1' fill='url(#rg)'/><rect x='26' y='888' width='1869' height='1' fill='#d9d9d9'/><rect x='0' y='888' width='25' height='1' fill='url(#rg)'/><rect x='26' y='909' width='1869' height='1' fill='#d9d9d9'/><rect x='0' y='909' width='25' height='1' fill='url(#rg)'/><rect x='26' y='930' width='1869' height='1' fill='#d9d9d9'/><rect x='0' y='930' width='25' height='1' fill='url(#rg)'/><rect x='26' y='951' width='1869' height='1' fill='#d9d9d9'/><rect x='0' y='951' width='25' height='1' fill='url(#rg)'/><rect x='26' y='972' width='1869' height='1' fill='#d9d9d9'/><rect x='0' y='972' width='25' height='1' fill='url(#rg)'/></svg><svg style='position:absolute;left:0;top:0' width='1920' height='1080'><defs><linearGradient id='hg' x1='0' y1='0' x2='0' y2='1'><stop offset='0' stop-color='#d4d4d4'/><stop offset='1' stop-color='#9c9c9c'/></linearGradient></defs><rect x='25' y='258' width='1' height='21' fill='url(#hg)'/><rect x='88' y='258' width='1' height='21' fill='url(#hg)'/><rect x='151' y='258' width='1' height='21' fill='url(#hg)'/><rect x='214' y='258' width='1' height='21' fill='url(#hg)'/><rect x='277' y='258' width='1' height='21' fill='url(#hg)'/><rect x='340' y='258' width='1' height='21' fill='url(#hg)'/><rect x='403' y='258' width='1' height='21' fill='url(#hg)'/><rect x='466' y='258' width='1' height='21' fill='url(#hg)'/><rect x='529' y='258' width='1' height='21' fill='url(#hg)'/><rect x='592' y='258' width='1' height='21' fill='url(#hg)'/><rect x='655' y='258' width='1' height='21' fill='url(#hg)'/><rect x='718' y='258' width='1' height='21' fill='url(#hg)'/><rect x='781' y='258' width='1' height='21' fill='url(#hg)'/><rect x='844' y='258' width='1' height='21' fill='url(#hg)'/><rect x='907' y='258' width='1' height='21' fill='url(#hg)'/><rect x='970' y='258' width='1' height='21' fill='url(#hg)'/><rect x='1033' y='258' width='1' height='21' fill='url(#hg)'/><rect x='1096' y='258' width='1' height='21' fill='url(#hg)'/><rect x='1159' y='258' width='1' height='21' fill='url(#hg)'/><rect x='1222' y='258' width='1' height='21' fill='url(#hg)'/><rect x='1285' y='258' width='1' height='21' fill='url(#hg)'/><rect x='1348' y='258' width='1' height='21' fill='url(#hg)'/><rect x='1411' y='258' width='1' height='21' fill='url(#hg)'/><rect x='1474' y='258' width='1' height='21' fill='url(#hg)'/><rect x='1537' y='258' width='1' height='21' fill='url(#hg)'/><rect x='1600' y='258' width='1' height='21' fill='url(#hg)'/><rect x='1663' y='258' width='1' height='21' fill='url(#hg)'/><rect x='1726' y='258' width='1' height='21' fill='url(#hg)'/><rect x='1789' y='258' width='1' height='21' fill='url(#hg)'/><rect x='1852' y='258' width='1' height='21' fill='url(#hg)'/><rect x='0' y='279' width='1895' height='1' fill='#ababab'/><rect x='25' y='279' width='1' height='694' fill='#b0b0b0'/><rect x='1894' y='280' width='1' height='693' fill='#ababab'/></svg><div class='c' style='left:25px;top:261px;width:63px;height:18px;text-align:center;font-size:14px;line-height:14px;color:#444;'>LI</div><div class='c' style='left:88px;top:261px;width:63px;height:18px;text-align:center;font-size:14px;line-height:14px;color:#444;'>LJ</div><div class='c' style='left:151px;top:261px;width:63px;height:18px;text-align:center;font-size:14px;line-height:14px;color:#444;'>LK</div><div class='c' style='left:214px;top:261px;width:63px;height:18px;text-align:center;font-size:14px;line-height:14px;color:#444;'>LL</div><div class='c' style='left:277px;top:261px;width:63px;height:18px;text-align:center;font-size:14px;line-height:14px;color:#444;'>LM</div><div class='c' style='left:340px;top:261px;width:63px;height:18px;text-align:center;font-size:14px;line-height:14px;color:#444;'>LN</div><div class='c' style='left:403px;top:261px;width:63px;height:18px;text-align:center;font-size:14px;line-height:14px;color:#444;'>LO</div><div class='c' style='left:466px;top:261px;width:63px;height:18px;text-align:center;font-size:14px;line-height:14px;color:#444;'>LP</div><div class='c' style='left:529px;top:261px;width:63px;height:18px;text-align:center;font-size:14px;line-height:14px;color:#444;'>LQ</div><div class='c' style='left:592px;top:261px;width:63px;height:18px;text-align:center;font-size:14px;line-height:14px;color:#444;'>LR</div><div class='c' style='left:655px;top:261px;width:63px;height:18px;text-align:center;font-size:14px;line-height:14px;color:#217346;'>LS</div><div class='c' style='left:718px;top:261px;width:63px;height:18px;text-align:center;font-size:14px;line-height:14px;color:#217346;'>LT</div><div class='c' style='left:781px;top:261px;width:63px;height:18px;text-align:center;font-size:14px;line-height:14px;color:#217346;'>LU</div><div class='c' style='left:844px;top:261px;width:63px;height:18px;text-align:center;font-size:14px;line-height:14px;color:#217346;'>LV</div><div class='c' style='left:907px;top:261px;width:63px;height:18px;text-align:center;font-size:14px;line-height:14px;color:#444;'>LW</div><div class='c' style='left:970px;top:261px;width:63px;height:18px;text-align:center;font-size:14px;line-height:14px;color:#444;'>LX</div><div class='c' style='left:1033px;top:261px;width:63px;height:18px;text-align:center;font-size:14px;line-height:14px;color:#444;'>LY</div><div class='c' style='left:1096px;top:261px;width:63px;height:18px;text-align:center;font-size:14px;line-height:14px;color:#444;'>LZ</div><div class='c' style='left:1159px;top:261px;width:63px;height:18px;text-align:center;font-size:14px;line-height:14px;color:#444;'>MA</div><div class='c' style='left:1222px;top:261px;width:63px;height:18px;text-align:center;font-size:14px;line-height:14px;color:#444;'>MB</div><div class='c' style='left:1285px;top:261px;width:63px;height:18px;text-align:center;font-size:14px;line-height:14px;color:#444;'>MC</div><div class='c' style='left:1348px;top:261px;width:63px;height:18px;text-align:center;font-size:14px;line-height:14px;color:#444;'>MD</div><div class='c' style='left:1411px;top:261px;width:63px;height:18px;text-align:center;font-size:14px;line-height:14px;color:#444;'>ME</div><div class='c' style='left:1474px;top:261px;width:63px;height:18px;text-align:center;font-size:14px;line-height:14px;color:#444;'>MF</div><div class='c' style='left:1537px;top:261px;width:63px;height:18px;text-align:center;font-size:14px;line-height:14px;color:#444;'>MG</div><div class='c' style='left:1600px;top:261px;width:63px;height:18px;text-align:center;font-size:14px;line-height:14px;color:#444;'>MH</div><div class='c' style='left:1663px;top:261px;width:63px;height:18px;text-align:center;font-size:14px;line-height:14px;color:#444;'>MI</div><div class='c' style='left:1726px;top:261px;width:63px;height:18px;text-align:center;font-size:14px;line-height:14px;color:#444;'>MJ</div><div class='c' style='left:1789px;top:261px;width:63px;height:18px;text-align:center;font-size:14px;line-height:14px;color:#444;'>MK</div><div class='c' style='left:1852px;top:261px;width:42px;height:18px;text-align:center;font-size:14px;line-height:14px;color:#444;'><span style='position:relative;left:9px'>ML</span></div><div style='position:absolute;left:655px;top:278px;width:253px;height:2px;background:#217346'></div><div class='c' style='left:-1px;top:283px;width:25px;height:16px;text-align:center;font-family:Liberation Mono,monospace;font-size:14px;line-height:14px;letter-spacing:-1.3px;color:#262626'><span style='position:relative;left:1px'>115</span></div><div class='c' style='left:-1px;top:304px;width:25px;height:16px;text-align:center;font-family:Liberation Mono,monospace;font-size:14px;line-height:14px;letter-spacing:-1.3px;color:#262626'><span style='position:relative;left:1px'>116</span></div><div class='c' style='left:-1px;top:325px;width:25px;height:16px;text-align:center;font-family:Liberation Mono,monospace;font-size:14px;line-height:14px;letter-spacing:-1.3px;color:#262626'><span style='position:relative;left:1px'>117</span></div><div class='c' style='left:-1px;top:346px;width:25px;height:16px;text-align:center;font-family:Liberation Mono,monospace;font-size:14px;line-height:14px;letter-spacing:-1.3px;color:#262626'><span style='position:relative;left:1px'>118</span></div><div class='c' style='left:-1px;top:367px;width:25px;height:16px;text-align:center;font-family:Liberation Mono,monospace;font-size:14px;line-height:14px;letter-spacing:-1.3px;color:#262626'><span style='position:relative;left:1px'>119</span></div><div class='c' style='left:-1px;top:388px;width:25px;height:16px;text-align:center;font-family:Liberation Mono,monospace;font-size:14px;line-height:14px;letter-spacing:-1.3px;color:#262626'><span style='position:relative;left:1px'>120</span></div><div class='c' style='left:-1px;top:409px;width:25px;height:16px;text-align:center;font-family:Liberation Mono,monospace;font-size:14px;line-height:14px;letter-spacing:-1.3px;color:#262626'><span style='position:relative;left:1px'>121</span></div><div class='c' style='left:-1px;top:430px;width:25px;height:16px;text-align:center;font-family:Liberation Mono,monospace;font-size:14px;line-height:14px;letter-spacing:-1.3px;color:#262626'><span style='position:relative;left:1px'>122</span></div><div class='c' style='left:-1px;top:451px;width:25px;height:16px;text-align:center;font-family:Liberation Mono,monospace;font-size:14px;line-height:14px;letter-spacing:-1.3px;color:#262626'><span style='position:relative;left:1px'>123</span></div><div class='c' style='left:-1px;top:472px;width:25px;height:16px;text-align:center;font-family:Liberation Mono,monospace;font-size:14px;line-height:14px;letter-spacing:-1.3px;color:#262626'><span style='position:relative;left:1px'>124</span></div><div class='c' style='left:-1px;top:493px;width:25px;height:16px;text-align:center;font-family:Liberation Mono,monospace;font-size:14px;line-height:14px;letter-spacing:-1.3px;color:#262626'><span style='position:relative;left:1px'>125</span></div><div class='c' style='left:-1px;top:514px;width:25px;height:16px;text-align:center;font-family:Liberation Mono,monospace;font-size:14px;line-height:14px;letter-spacing:-1.3px;color:#262626'><span style='position:relative;left:1px'>126</span></div><div class='c' style='left:-1px;top:535px;width:25px;height:16px;text-align:center;font-family:Liberation Mono,monospace;font-size:14px;line-height:14px;letter-spacing:-1.3px;color:#262626'><span style='position:relative;left:1px'>127</span></div><div class='c' style='left:-1px;top:556px;width:25px;height:16px;text-align:center;font-family:Liberation Mono,monospace;font-size:14px;line-height:14px;letter-spacing:-1.3px;color:#262626'><span style='position:relative;left:1px'>128</span></div><div class='c' style='left:-1px;top:577px;width:25px;height:16px;text-align:center;font-family:Liberation Mono,monospace;font-size:14px;line-height:14px;letter-spacing:-1.3px;color:#262626'><span style='position:relative;left:1px'>129</span></div><div class='c' style='left:-1px;top:598px;width:25px;height:16px;text-align:center;font-family:Liberation Mono,monospace;font-size:14px;line-height:14px;letter-spacing:-1.3px;color:#262626'><span style='position:relative;left:1px'>130</span></div><div style='position:absolute;left:0px;top:616px;width:25px;height:20px;background:#d2d2d2'></div><div class='c' style='left:-1px;top:619px;width:25px;height:16px;text-align:center;font-family:Liberation Mono,monospace;font-size:14px;line-height:14px;letter-spacing:-1.3px;color:#217346'><span style='position:relative;left:1px'>131</span></div><div class='c' style='left:-1px;top:640px;width:25px;height:16px;text-align:center;font-family:Liberation Mono,monospace;font-size:14px;line-height:14px;letter-spacing:-1.3px;color:#262626'><span style='position:relative;left:1px'>132</span></div><div class='c' style='left:-1px;top:661px;width:25px;height:16px;text-align:center;font-family:Liberation Mono,monospace;font-size:14px;line-height:14px;letter-spacing:-1.3px;color:#262626'><span style='position:relative;left:1px'>133</span></div><div class='c' style='left:-1px;top:682px;width:25px;height:16px;text-align:center;font-family:Liberation Mono,monospace;font-size:14px;line-height:14px;letter-spacing:-1.3px;color:#262626'><span style='position:relative;left:1px'>134</span></div><div class='c' style='left:-1px;top:703px;width:25px;height:16px;text-align:center;font-family:Liberation Mono,monospace;font-size:14px;line-height:14px;letter-spacing:-1.3px;color:#262626'><span style='position:relative;left:1px'>135</span></div><div class='c' style='left:-1px;top:724px;width:25px;height:16px;text-align:center;font-family:Liberation Mono,monospace;font-size:14px;line-height:14px;letter-spacing:-1.3px;color:#262626'><span style='position:relative;left:1px'>136</span></div><div class='c' style='left:-1px;top:745px;width:25px;height:16px;text-align:center;font-family:Liberation Mono,monospace;font-size:14px;line-height:14px;letter-spacing:-1.3px;color:#262626'><span style='position:relative;left:1px'>137</span></div><div class='c' style='left:-1px;top:766px;width:25px;height:16px;text-align:center;font-family:Liberation Mono,monospace;font-size:14px;line-height:14px;letter-spacing:-1.3px;color:#262626'><span style='position:relative;left:1px'>138</span></div><div class='c' style='left:-1px;top:787px;width:25px;height:16px;text-align:center;font-family:Liberation Mono,monospace;font-size:14px;line-height:14px;letter-spacing:-1.3px;color:#262626'><span style='position:relative;left:1px'>139</span></div><div class='c' style='left:-1px;top:808px;width:25px;height:16px;text-align:center;font-family:Liberation Mono,monospace;font-size:14px;line-height:14px;letter-spacing:-1.3px;color:#262626'><span style='position:relative;left:1px'>140</span></div><div class='c' style='left:-1px;top:829px;width:25px;height:16px;text-align:center;font-family:Liberation Mono,monospace;font-size:14px;line-height:14px;letter-spacing:-1.3px;color:#262626'><span style='position:relative;left:1px'>141</span></div><div class='c' style='left:-1px;top:850px;width:25px;height:16px;text-align:center;font-family:Liberation Mono,monospace;font-size:14px;line-height:14px;letter-spacing:-1.3px;color:#262626'><span style='position:relative;left:1px'>142</span></div><div class='c' style='left:-1px;top:871px;width:25px;height:16px;text-align:center;font-family:Liberation Mono,monospace;font-size:14px;line-height:14px;letter-spacing:-1.3px;color:#262626'><span style='position:relative;left:1px'>143</span></div><div class='c' style='left:-1px;top:892px;width:25px;height:16px;text-align:center;font-family:Liberation Mono,monospace;font-size:14px;line-height:14px;letter-spacing:-1.3px;color:#262626'><span style='position:relative;left:1px'>144</span></div><div class='c' style='left:-1px;top:913px;width:25px;height:16px;text-align:center;font-family:Liberation Mono,monospace;font-size:14px;line-height:14px;letter-spacing:-1.3px;color:#262626'><span style='position:relative;left:1px'>145</span></div><div class='c' style='left:-1px;top:934px;width:25px;height:16px;text-align:center;font-family:Liberation Mono,monospace;font-size:14px;line-height:14px;letter-spacing:-1.3px;color:#262626'><span style='position:relative;left:1px'>146</span></div><div class='c' style='left:-1px;top:955px;width:25px;height:16px;text-align:center;font-family:Liberation Mono,monospace;font-size:14px;line-height:14px;letter-spacing:-1.3px;color:#262626'><span style='position:relative;left:1px'>147</span></div><div style='position:absolute;left:24px;top:615px;width:2px;height:22px;background:#217346'></div><div style='position:absolute;left:718px;top:617px;width:189px;height:18px;background:#c6c6c6'></div><svg style='position:absolute;left:0;top:0' width='1920' height='1080'><rect x='781' y='617' width='1' height='18' fill='#a8a8a8'/><rect x='844' y='617' width='1' height='18' fill='#a8a8a8'/><rect x='718' y='617' width='1' height='18' fill='#a8a8a8'/></svg><div class='c' style='left:26px;top:282px;width:59.4px;height:16px;text-align:right;font-size:14px;line-height:14px;letter-spacing:-0.8px;color:#000;overflow:visible'><span style='margin-right:0px'>6627</span></div><div class='c' style='left:89px;top:283px;width:62px;height:16px;font-size:12px;line-height:12px;letter-spacing:1.0px;color:#000;text-indent:1.5px;-webkit-text-stroke:0.15px #000'>テラプローブ</div><div class='c' style='left:152px;top:282px;width:59.4px;height:16px;text-align:right;font-size:14px;line-height:14px;letter-spacing:-0.8px;color:#000;overflow:visible'><span style='margin-right:0px'>1258</span></div><div class='c' style='left:215px;top:282px;width:59.4px;height:16px;text-align:right;font-size:14px;line-height:14px;letter-spacing:-0.8px;color:#000;overflow:visible'><span style='margin-right:0px'>1.218992</span></div><div class='c' style='left:26px;top:303px;width:59.4px;height:16px;text-align:right;font-size:14px;line-height:14px;letter-spacing:-0.8px;color:#000;overflow:visible'><span style='margin-right:0px'>6266</span></div><div class='c' style='left:89px;top:304px;width:62px;height:16px;font-size:12px;line-height:12px;letter-spacing:1.0px;color:#000;text-indent:1.5px;-webkit-text-stroke:0.15px #000'>タツモ</div><div class='c' style='left:152px;top:303px;width:59.4px;height:16px;text-align:right;font-size:14px;line-height:14px;letter-spacing:-0.8px;color:#000;overflow:visible'><span style='margin-right:0px'>2058</span></div><div class='c' style='left:215px;top:303px;width:59.4px;height:16px;text-align:right;font-size:14px;line-height:14px;letter-spacing:-0.8px;color:#000;overflow:visible'><span style='margin-right:0px'>1.217751</span></div><div class='c' style='left:26px;top:324px;width:59.4px;height:16px;text-align:right;font-size:14px;line-height:14px;letter-spacing:-0.8px;color:#000;overflow:visible'><span style='margin-right:0px'>9073</span></div><div class='c' style='left:89px;top:325px;width:62px;height:16px;font-size:12px;line-height:12px;letter-spacing:1.0px;color:#000;text-indent:1.5px;-webkit-text-stroke:0.15px #000'>京極運輸商事</div><div class='c' style='left:152px;top:324px;width:59.4px;height:16px;text-align:right;font-size:14px;line-height:14px;letter-spacing:-0.8px;color:#000;overflow:visible'><span style='margin-right:0px'>630</span></div><div class='c' style='left:215px;top:324px;width:59.4px;height:16px;text-align:right;font-size:14px;line-height:14px;letter-spacing:-0.8px;color:#000;overflow:visible'><span style='margin-right:0px'>1.216216</span></div><div class='c' style='left:26px;top:345px;width:59.4px;height:16px;text-align:right;font-size:14px;line-height:14px;letter-spacing:-0.8px;color:#000;overflow:visible'><span style='margin-right:0px'>2782</span></div><div class='c' style='left:89px;top:346px;width:62px;height:16px;font-size:12px;line-height:12px;letter-spacing:1.0px;color:#000;text-indent:1.5px;-webkit-text-stroke:0.15px #000'>セリア</div><div class='c' style='left:152px;top:345px;width:59.4px;height:16px;text-align:right;font-size:14px;line-height:14px;letter-spacing:-0.8px;color:#000;overflow:visible'><span style='margin-right:0px'>4250</span></div><div class='c' style='left:215px;top:345px;width:59.4px;height:16px;text-align:right;font-size:14px;line-height:14px;letter-spacing:-0.8px;color:#000;overflow:visible'><span style='margin-right:0px'>1.216023</span></div><div class='c' style='left:26px;top:366px;width:59.4px;height:16px;text-align:right;font-size:14px;line-height:14px;letter-spacing:-0.8px;color:#000;overflow:visible'><span style='margin-right:0px'>6871</span></div><div class='c' style='left:89px;top:367px;width:62px;height:16px;font-size:12px;line-height:12px;letter-spacing:1.0px;color:#000;text-indent:1.5px;-webkit-text-stroke:0.15px #000'>日本マイクロ</div><div class='c' style='left:152px;top:366px;width:59.4px;height:16px;text-align:right;font-size:14px;line-height:14px;letter-spacing:-0.8px;color:#000;overflow:visible'><span style='margin-right:0px'>1898</span></div><div class='c' style='left:215px;top:366px;width:59.4px;height:16px;text-align:right;font-size:14px;line-height:14px;letter-spacing:-0.8px;color:#000;overflow:visible'><span style='margin-right:0px'>1.215109</span></div><div class='c' style='left:26px;top:387px;width:59.4px;height:16px;text-align:right;font-size:14px;line-height:14px;letter-spacing:-0.8px;color:#000;overflow:visible'><span style='margin-right:0px'>3436</span></div><div class='c' style='left:89px;top:388px;width:62px;height:16px;font-size:12px;line-height:12px;letter-spacing:1.0px;color:#000;text-indent:1.5px;-webkit-text-stroke:0.15px #000'>ＳＵＭＣＯ</div><div class='c' style='left:152px;top:387px;width:59.4px;height:16px;text-align:right;font-size:14px;line-height:14px;letter-spacing:-0.8px;color:#000;overflow:visible'><span style='margin-right:0px'>2810</span></div><div class='c' style='left:215px;top:387px;width:59.4px;height:16px;text-align:right;font-size:14px;line-height:14px;letter-spacing:-0.8px;color:#000;overflow:visible'><span style='margin-right:0px'>1.214347</span></div><div class='c' style='left:26px;top:408px;width:59.4px;height:16px;text-align:right;font-size:14px;line-height:14px;letter-spacing:-0.8px;color:#000;overflow:visible'><span style='margin-right:0px'>6721</span></div><div class='c' style='left:89px;top:409px;width:62px;height:16px;font-size:12px;line-height:12px;letter-spacing:1.0px;color:#000;text-indent:1.5px;-webkit-text-stroke:0.15px #000'>ウインテスト</div><div class='c' style='left:152px;top:408px;width:59.4px;height:16px;text-align:right;font-size:14px;line-height:14px;letter-spacing:-0.8px;color:#000;overflow:visible'><span style='margin-right:0px'>319</span></div><div class='c' style='left:215px;top:408px;width:59.4px;height:16px;text-align:right;font-size:14px;line-height:14px;letter-spacing:-0.8px;color:#000;overflow:visible'><span style='margin-right:0px'>1.212928</span></div><div class='c' style='left:26px;top:429px;width:59.4px;height:16px;text-align:right;font-size:14px;line-height:14px;letter-spacing:-0.8px;color:#000;overflow:visible'><span style='margin-right:0px'>4186</span></div><div class='c' style='left:89px;top:430px;width:62px;height:16px;font-size:12px;line-height:12px;letter-spacing:1.0px;color:#000;text-indent:1.5px;-webkit-text-stroke:0.15px #000'>東京応化工業</div><div class='c' style='left:152px;top:429px;width:59.4px;height:16px;text-align:right;font-size:14px;line-height:14px;letter-spacing:-0.8px;color:#000;overflow:visible'><span style='margin-right:0px'>7660</span></div><div class='c' style='left:215px;top:429px;width:59.4px;height:16px;text-align:right;font-size:14px;line-height:14px;letter-spacing:-0.8px;color:#000;overflow:visible'><span style='margin-right:0px'>1.212025</span></div><div class='c' style='left:26px;top:450px;width:59.4px;height:16px;text-align:right;font-size:14px;line-height:14px;letter-spacing:-0.8px;color:#000;overflow:visible'><span style='margin-right:0px'>2317</span></div><div class='c' style='left:89px;top:451px;width:62px;height:16px;font-size:12px;line-height:12px;letter-spacing:1.0px;color:#000;text-indent:1.5px;-webkit-text-stroke:0.15px #000'>システナ</div><div class='c' style='left:152px;top:450px;width:59.4px;height:16px;text-align:right;font-size:14px;line-height:14px;letter-spacing:-0.8px;color:#000;overflow:visible'><span style='margin-right:0px'>2387</span></div><div class='c' style='left:215px;top:450px;width:59.4px;height:16px;text-align:right;font-size:14px;line-height:14px;letter-spacing:-0.8px;color:#000;overflow:visible'><span style='margin-right:0px'>1.211675</span></div><div class='c' style='left:26px;top:471px;width:59.4px;height:16px;text-align:right;font-size:14px;line-height:14px;letter-spacing:-0.8px;color:#000;overflow:visible'><span style='margin-right:0px'>2332</span></div><div class='c' style='left:89px;top:472px;width:62px;height:16px;font-size:12px;line-height:12px;letter-spacing:1.0px;color:#000;text-indent:1.5px;-webkit-text-stroke:0.15px #000'>クエスト</div><div class='c' style='left:152px;top:471px;width:59.4px;height:16px;text-align:right;font-size:14px;line-height:14px;letter-spacing:-0.8px;color:#000;overflow:visible'><span style='margin-right:0px'>1708</span></div><div class='c' style='left:215px;top:471px;width:59.4px;height:16px;text-align:right;font-size:14px;line-height:14px;letter-spacing:-0.8px;color:#000;overflow:visible'><span style='margin-right:0px'>1.209632</span></div><div class='c' style='left:26px;top:492px;width:59.4px;height:16px;text-align:right;font-size:14px;line-height:14px;letter-spacing:-0.8px;color:#000;overflow:visible'><span style='margin-right:0px'>3633</span></div><div class='c' style='left:89px;top:493px;width:62px;height:16px;font-size:12px;line-height:12px;letter-spacing:1.0px;color:#000;text-indent:1.5px;-webkit-text-stroke:0.15px #000'>ＧＭＯペパボ</div><div class='c' style='left:152px;top:492px;width:59.4px;height:16px;text-align:right;font-size:14px;line-height:14px;letter-spacing:-0.8px;color:#000;overflow:visible'><span style='margin-right:0px'>7470</span></div><div class='c' style='left:215px;top:492px;width:59.4px;height:16px;text-align:right;font-size:14px;line-height:14px;letter-spacing:-0.8px;color:#000;overflow:visible'><span style='margin-right:0px'>1.208738</span></div><div class='c' style='left:26px;top:513px;width:59.4px;height:16px;text-align:right;font-size:14px;line-height:14px;letter-spacing:-0.8px;color:#000;overflow:visible'><span style='margin-right:0px'>4431</span></div><div class='c' style='left:89px;top:514px;width:62px;height:16px;font-size:12px;line-height:12px;letter-spacing:1.0px;color:#000;text-indent:1.5px;-webkit-text-stroke:0.15px #000'>スマレジ</div><div class='c' style='left:152px;top:513px;width:59.4px;height:16px;text-align:right;font-size:14px;line-height:14px;letter-spacing:-0.8px;color:#000;overflow:visible'><span style='margin-right:0px'>5830</span></div><div class='c' style='left:215px;top:513px;width:59.4px;height:16px;text-align:right;font-size:14px;line-height:14px;letter-spacing:-0.8px;color:#000;overflow:visible'><span style='margin-right:0px'>1.207039</span></div><div class='c' style='left:26px;top:534px;width:59.4px;height:16px;text-align:right;font-size:14px;line-height:14px;letter-spacing:-0.8px;color:#000;overflow:visible'><span style='margin-right:0px'>5423</span></div><div class='c' style='left:89px;top:535px;width:62px;height:16px;font-size:12px;line-height:12px;letter-spacing:1.0px;color:#000;text-indent:1.5px;-webkit-text-stroke:0.15px #000'>東京製鐵</div><div class='c' style='left:152px;top:534px;width:59.4px;height:16px;text-align:right;font-size:14px;line-height:14px;letter-spacing:-0.8px;color:#000;overflow:visible'><span style='margin-right:0px'>907</span></div><div class='c' style='left:215px;top:534px;width:59.4px;height:16px;text-align:right;font-size:14px;line-height:14px;letter-spacing:-0.8px;color:#000;overflow:visible'><span style='margin-right:0px'>1.206117</span></div><div class='c' style='left:26px;top:555px;width:59.4px;height:16px;text-align:right;font-size:14px;line-height:14px;letter-spacing:-0.8px;color:#000;overflow:visible'><span style='margin-right:0px'>6176</span></div><div class='c' style='left:89px;top:556px;width:62px;height:16px;font-size:12px;line-height:12px;letter-spacing:1.0px;color:#000;text-indent:1.5px;-webkit-text-stroke:0.15px #000'>ブランジスタ</div><div class='c' style='left:152px;top:555px;width:59.4px;height:16px;text-align:right;font-size:14px;line-height:14px;letter-spacing:-0.8px;color:#000;overflow:visible'><span style='margin-right:0px'>644</span></div><div class='c' style='left:215px;top:555px;width:59.4px;height:16px;text-align:right;font-size:14px;line-height:14px;letter-spacing:-0.8px;color:#000;overflow:visible'><span style='margin-right:0px'>1.205993</span></div><div class='c' style='left:26px;top:576px;width:59.4px;height:16px;text-align:right;font-size:14px;line-height:14px;letter-spacing:-0.8px;color:#000;overflow:visible'><span style='margin-right:0px'>6560</span></div><div class='c' style='left:89px;top:577px;width:62px;height:16px;font-size:12px;line-height:12px;letter-spacing:1.0px;color:#000;text-indent:1.5px;-webkit-text-stroke:0.15px #000'>エル・ティー</div><div class='c' style='left:152px;top:576px;width:59.4px;height:16px;text-align:right;font-size:14px;line-height:14px;letter-spacing:-0.8px;color:#000;overflow:visible'><span style='margin-right:0px'>4190</span></div><div class='c' style='left:215px;top:576px;width:59.4px;height:16px;text-align:right;font-size:14px;line-height:14px;letter-spacing:-0.8px;color:#000;overflow:visible'><span style='margin-right:0px'>1.205755</span></div><div class='c' style='left:26px;top:597px;width:59.4px;height:16px;text-align:right;font-size:14px;line-height:14px;letter-spacing:-0.8px;color:#000;overflow:visible'><span style='margin-right:0px'>4437</span></div><div class='c' style='left:89px;top:598px;width:62px;height:16px;font-size:12px;line-height:12px;letter-spacing:1.0px;color:#000;text-indent:1.5px;-webkit-text-stroke:0.15px #000'>ｇｏｏｄｄａｙｓ</div><div class='c' style='left:152px;top:597px;width:59.4px;height:16px;text-align:right;font-size:14px;line-height:14px;letter-spacing:-0.8px;color:#000;overflow:visible'><span style='margin-right:0px'>1122</span></div><div class='c' style='left:215px;top:597px;width:59.4px;height:16px;text-align:right;font-size:14px;line-height:14px;letter-spacing:-0.8px;color:#000;overflow:visible'><span style='margin-right:0px'>1.205156</span></div><div class='c' style='left:26px;top:618px;width:59.4px;height:16px;text-align:right;font-size:14px;line-height:14px;letter-spacing:-0.8px;color:#000;overflow:visible'><span style='margin-right:0px'>7683</span></div><div class='c' style='left:89px;top:619px;width:62px;height:16px;font-size:12px;line-height:12px;letter-spacing:1.0px;color:#000;text-indent:1.5px;-webkit-text-stroke:0.15px #000'>ダブルエー</div><div class='c' style='left:152px;top:618px;width:59.4px;height:16px;text-align:right;font-size:14px;line-height:14px;letter-spacing:-0.8px;color:#000;overflow:visible'><span style='margin-right:0px'>3475</span></div><div class='c' style='left:215px;top:618px;width:59.4px;height:16px;text-align:right;font-size:14px;line-height:14px;letter-spacing:-0.8px;color:#000;overflow:visible'><span style='margin-right:0px'>1.204924</span></div><div class='c' style='left:26px;top:639px;width:59.4px;height:16px;text-align:right;font-size:14px;line-height:14px;letter-spacing:-0.8px;color:#000;overflow:visible'><span style='margin-right:0px'>4592</span></div><div class='c' style='left:89px;top:640px;width:62px;height:16px;font-size:12px;line-height:12px;letter-spacing:1.0px;color:#000;text-indent:1.5px;-webkit-text-stroke:0.15px #000'>サンバイオ</div><div class='c' style='left:152px;top:639px;width:59.4px;height:16px;text-align:right;font-size:14px;line-height:14px;letter-spacing:-0.8px;color:#000;overflow:visible'><span style='margin-right:0px'>1771</span></div><div class='c' style='left:215px;top:639px;width:59.4px;height:16px;text-align:right;font-size:14px;line-height:14px;letter-spacing:-0.8px;color:#000;overflow:visible'><span style='margin-right:0px'>1.204762</span></div><div class='c' style='left:26px;top:660px;width:59.4px;height:16px;text-align:right;font-size:14px;line-height:14px;letter-spacing:-0.8px;color:#000;overflow:visible'><span style='margin-right:0px'>7729</span></div><div class='c' style='left:89px;top:661px;width:62px;height:16px;font-size:12px;line-height:12px;letter-spacing:1.0px;color:#000;text-indent:1.5px;-webkit-text-stroke:0.15px #000'>東京精密</div><div class='c' style='left:152px;top:660px;width:59.4px;height:16px;text-align:right;font-size:14px;line-height:14px;letter-spacing:-0.8px;color:#000;overflow:visible'><span style='margin-right:0px'>5660</span></div><div class='c' style='left:215px;top:660px;width:59.4px;height:16px;text-align:right;font-size:14px;line-height:14px;letter-spacing:-0.8px;color:#000;overflow:visible'><span style='margin-right:0px'>1.204255</span></div><div class='c' style='left:26px;top:681px;width:59.4px;height:16px;text-align:right;font-size:14px;line-height:14px;letter-spacing:-0.8px;color:#000;overflow:visible'><span style='margin-right:0px'>6189</span></div><div class='c' style='left:89px;top:682px;width:62px;height:16px;font-size:12px;line-height:12px;letter-spacing:1.0px;color:#000;text-indent:1.5px;-webkit-text-stroke:0.15px #000'>グローバル</div><div class='c' style='left:152px;top:681px;width:59.4px;height:16px;text-align:right;font-size:14px;line-height:14px;letter-spacing:-0.8px;color:#000;overflow:visible'><span style='margin-right:0px'>1041</span></div><div class='c' style='left:215px;top:681px;width:59.4px;height:16px;text-align:right;font-size:14px;line-height:14px;letter-spacing:-0.8px;color:#000;overflow:visible'><span style='margin-right:0px'>1.203468</span></div><div class='c' style='left:26px;top:702px;width:59.4px;height:16px;text-align:right;font-size:14px;line-height:14px;letter-spacing:-0.8px;color:#000;overflow:visible'><span style='margin-right:0px'>3524</span></div><div class='c' style='left:89px;top:703px;width:62px;height:16px;font-size:12px;line-height:12px;letter-spacing:1.0px;color:#000;text-indent:1.5px;-webkit-text-stroke:0.15px #000'>日東製網</div><div class='c' style='left:152px;top:702px;width:59.4px;height:16px;text-align:right;font-size:14px;line-height:14px;letter-spacing:-0.8px;color:#000;overflow:visible'><span style='margin-right:0px'>1942</span></div><div class='c' style='left:215px;top:702px;width:59.4px;height:16px;text-align:right;font-size:14px;line-height:14px;letter-spacing:-0.8px;color:#000;overflow:visible'><span style='margin-right:0px'>1.200247</span></div><div class='c' style='left:26px;top:723px;width:59.4px;height:16px;text-align:right;font-size:14px;line-height:14px;letter-spacing:-0.8px;color:#000;overflow:visible'><span style='margin-right:0px'>8155</span></div><div class='c' style='left:89px;top:724px;width:62px;height:16px;font-size:12px;line-height:12px;letter-spacing:1.0px;color:#000;text-indent:1.5px;-webkit-text-stroke:0.15px #000'>三益半導体</div><div class='c' style='left:152px;top:723px;width:59.4px;height:16px;text-align:right;font-size:14px;line-height:14px;letter-spacing:-0.8px;color:#000;overflow:visible'><span style='margin-right:0px'>3000</span></div><div class='c' style='left:215px;top:723px;width:59.4px;height:16px;text-align:right;font-size:14px;line-height:14px;letter-spacing:-0.8px;color:#000;overflow:visible'><span style='margin-right:0px'>1.2</span></div><div class='c' style='left:656px;top:282px;width:59.4px;height:16px;text-align:right;font-size:14px;line-height:14px;letter-spacing:-0.8px;color:#000;overflow:visible'><span style='margin-right:0px'>4992</span></div><div class='c' style='left:719px;top:283px;width:62px;height:16px;font-size:12px;line-height:12px;letter-spacing:1.0px;color:#000;text-indent:1.5px;-webkit-text-stroke:0.15px #000'>北興化学工業</div><div class='c' style='left:782px;top:282px;width:59.4px;height:16px;text-align:right;font-size:14px;line-height:14px;letter-spacing:-0.8px;color:#000;overflow:visible'><span style='margin-right:0px'>1290</span></div><div class='c' style='left:845px;top:282px;width:59.4px;height:16px;text-align:right;font-size:14px;line-height:14px;letter-spacing:-0.8px;color:#000;overflow:visible'><span style='margin-right:0px'>1.247582</span></div><div class='c' style='left:656px;top:303px;width:59.4px;height:16px;text-align:right;font-size:14px;line-height:14px;letter-spacing:-0.8px;color:#000;overflow:visible'><span style='margin-right:0px'>8155</span></div><div class='c' style='left:719px;top:304px;width:62px;height:16px;font-size:12px;line-height:12px;letter-spacing:1.0px;color:#000;text-indent:1.5px;-webkit-text-stroke:0.15px #000'>三益半導体</div><div class='c' style='left:782px;top:303px;width:59.4px;height:16px;text-align:right;font-size:14px;line-height:14px;letter-spacing:-0.8px;color:#000;overflow:visible'><span style='margin-right:0px'>3065</span></div><div class='c' style='left:845px;top:303px;width:59.4px;height:16px;text-align:right;font-size:14px;line-height:14px;letter-spacing:-0.8px;color:#000;overflow:visible'><span style='margin-right:0px'>1.243912</span></div><div class='c' style='left:656px;top:324px;width:59.4px;height:16px;text-align:right;font-size:14px;line-height:14px;letter-spacing:-0.8px;color:#000;overflow:visible'><span style='margin-right:0px'>7851</span></div><div class='c' style='left:719px;top:325px;width:62px;height:16px;font-size:12px;line-height:12px;letter-spacing:1.0px;color:#000;text-indent:1.5px;-webkit-text-stroke:0.15px #000'>カワセコンピ</div><div class='c' style='left:782px;top:324px;width:59.4px;height:16px;text-align:right;font-size:14px;line-height:14px;letter-spacing:-0.8px;color:#000;overflow:visible'><span style='margin-right:0px'>327</span></div><div class='c' style='left:845px;top:324px;width:59.4px;height:16px;text-align:right;font-size:14px;line-height:14px;letter-spacing:-0.8px;color:#000;overflow:visible'><span style='margin-right:0px'>1.243346</span></div><div class='c' style='left:656px;top:345px;width:59.4px;height:16px;text-align:right;font-size:14px;line-height:14px;letter-spacing:-0.8px;color:#000;overflow:visible'><span style='margin-right:0px'>6502</span></div><div class='c' style='left:719px;top:346px;width:62px;height:16px;font-size:12px;line-height:12px;letter-spacing:1.0px;color:#000;text-indent:1.5px;-webkit-text-stroke:0.15px #000'>東芝</div><div class='c' style='left:782px;top:345px;width:59.4px;height:16px;text-align:right;font-size:14px;line-height:14px;letter-spacing:-0.8px;color:#000;overflow:visible'><span style='margin-right:0px'>4530</span></div><div class='c' style='left:845px;top:345px;width:59.4px;height:16px;text-align:right;font-size:14px;line-height:14px;letter-spacing:-0.8px;color:#000;overflow:visible'><span style='margin-right:0px'>1.242798</span></div><div class='c' style='left:656px;top:366px;width:59.4px;height:16px;text-align:right;font-size:14px;line-height:14px;letter-spacing:-0.8px;color:#000;overflow:visible'><span style='margin-right:0px'>7901</span></div><div class='c' style='left:719px;top:367px;width:62px;height:16px;font-size:12px;line-height:12px;letter-spacing:1.0px;color:#000;text-indent:1.5px;-webkit-text-stroke:0.15px #000'>マツモト</div><div class='c' style='left:782px;top:366px;width:59.4px;height:16px;text-align:right;font-size:14px;line-height:14px;letter-spacing:-0.8px;color:#000;overflow:visible'><span style='margin-right:0px'>3155</span></div><div class='c' style='left:845px;top:366px;width:59.4px;height:16px;text-align:right;font-size:14px;line-height:14px;letter-spacing:-0.8px;color:#000;overflow:visible'><span style='margin-right:0px'>1.242615</span></div><div class='c' style='left:656px;top:387px;width:59.4px;height:16px;text-align:right;font-size:14px;line-height:14px;letter-spacing:-0.8px;color:#000;overflow:visible'><span style='margin-right:0px'>8186</span></div><div class='c' style='left:719px;top:388px;width:62px;height:16px;font-size:12px;line-height:12px;letter-spacing:1.0px;color:#000;text-indent:1.5px;-webkit-text-stroke:0.15px #000'>大塚家具</div><div class='c' style='left:782px;top:387px;width:59.4px;height:16px;text-align:right;font-size:14px;line-height:14px;letter-spacing:-0.8px;color:#000;overflow:visible'><span style='margin-right:0px'>298</span></div><div class='c' style='left:845px;top:387px;width:59.4px;height:16px;text-align:right;font-size:14px;line-height:14px;letter-spacing:-0.8px;color:#000;overflow:visible'><span style='margin-right:0px'>1.241667</span></div><div class='c' style='left:656px;top:408px;width:59.4px;height:16px;text-align:right;font-size:14px;line-height:14px;letter-spacing:-0.8px;color:#000;overflow:visible'><span style='margin-right:0px'>6871</span></div><div class='c' style='left:719px;top:409px;width:62px;height:16px;font-size:12px;line-height:12px;letter-spacing:1.0px;color:#000;text-indent:1.5px;-webkit-text-stroke:0.15px #000'>日本マイクロ</div><div class='c' style='left:782px;top:408px;width:59.4px;height:16px;text-align:right;font-size:14px;line-height:14px;letter-spacing:-0.8px;color:#000;overflow:visible'><span style='margin-right:0px'>1925</span></div><div class='c' style='left:845px;top:408px;width:59.4px;height:16px;text-align:right;font-size:14px;line-height:14px;letter-spacing:-0.8px;color:#000;overflow:visible'><span style='margin-right:0px'>1.241135</span></div><div class='c' style='left:656px;top:429px;width:59.4px;height:16px;text-align:right;font-size:14px;line-height:14px;letter-spacing:-0.8px;color:#000;overflow:visible'><span style='margin-right:0px'>4970</span></div><div class='c' style='left:719px;top:430px;width:62px;height:16px;font-size:12px;line-height:12px;letter-spacing:1.0px;color:#000;text-indent:1.5px;-webkit-text-stroke:0.15px #000'>東洋合成工業</div><div class='c' style='left:782px;top:429px;width:59.4px;height:16px;text-align:right;font-size:14px;line-height:14px;letter-spacing:-0.8px;color:#000;overflow:visible'><span style='margin-right:0px'>13420</span></div><div class='c' style='left:845px;top:429px;width:59.4px;height:16px;text-align:right;font-size:14px;line-height:14px;letter-spacing:-0.8px;color:#000;overflow:visible'><span style='margin-right:0px'>1.240296</span></div><div class='c' style='left:656px;top:450px;width:59.4px;height:16px;text-align:right;font-size:14px;line-height:14px;letter-spacing:-0.8px;color:#000;overflow:visible'><span style='margin-right:0px'>6730</span></div><div class='c' style='left:719px;top:451px;width:62px;height:16px;font-size:12px;line-height:12px;letter-spacing:1.0px;color:#000;text-indent:1.5px;-webkit-text-stroke:0.15px #000'>アクセル</div><div class='c' style='left:782px;top:450px;width:59.4px;height:16px;text-align:right;font-size:14px;line-height:14px;letter-spacing:-0.8px;color:#000;overflow:visible'><span style='margin-right:0px'>988</span></div><div class='c' style='left:845px;top:450px;width:59.4px;height:16px;text-align:right;font-size:14px;line-height:14px;letter-spacing:-0.8px;color:#000;overflow:visible'><span style='margin-right:0px'>1.239649</span></div><div class='c' style='left:656px;top:471px;width:59.4px;height:16px;text-align:right;font-size:14px;line-height:14px;letter-spacing:-0.8px;color:#000;overflow:visible'><span style='margin-right:0px'>4490</span></div><div class='c' style='left:719px;top:472px;width:62px;height:16px;font-size:12px;line-height:12px;letter-spacing:1.0px;color:#000;text-indent:1.5px;-webkit-text-stroke:0.15px #000'>ビザスク</div><div class='c' style='left:782px;top:471px;width:59.4px;height:16px;text-align:right;font-size:14px;line-height:14px;letter-spacing:-0.8px;color:#000;overflow:visible'><span style='margin-right:0px'>4275</span></div><div class='c' style='left:845px;top:471px;width:59.4px;height:16px;text-align:right;font-size:14px;line-height:14px;letter-spacing:-0.8px;color:#000;overflow:visible'><span style='margin-right:0px'>1.23913</span></div><div class='c' style='left:656px;top:492px;width:59.4px;height:16px;text-align:right;font-size:14px;line-height:14px;letter-spacing:-0.8px;color:#000;overflow:visible'><span style='margin-right:0px'>3566</span></div><div class='c' style='left:719px;top:493px;width:62px;height:16px;font-size:12px;line-height:12px;letter-spacing:1.0px;color:#000;text-indent:1.5px;-webkit-text-stroke:0.15px #000'>ユニフォーム</div><div class='c' style='left:782px;top:492px;width:59.4px;height:16px;text-align:right;font-size:14px;line-height:14px;letter-spacing:-0.8px;color:#000;overflow:visible'><span style='margin-right:0px'>2064</span></div><div class='c' style='left:845px;top:492px;width:59.4px;height:16px;text-align:right;font-size:14px;line-height:14px;letter-spacing:-0.8px;color:#000;overflow:visible'><span style='margin-right:0px'>1.238152</span></div><div class='c' style='left:656px;top:513px;width:59.4px;height:16px;text-align:right;font-size:14px;line-height:14px;letter-spacing:-0.8px;color:#000;overflow:visible'><span style='margin-right:0px'>7545</span></div><div class='c' style='left:719px;top:514px;width:62px;height:16px;font-size:12px;line-height:12px;letter-spacing:1.0px;color:#000;text-indent:1.5px;-webkit-text-stroke:0.15px #000'>西松屋チェーン</div><div class='c' style='left:782px;top:513px;width:59.4px;height:16px;text-align:right;font-size:14px;line-height:14px;letter-spacing:-0.8px;color:#000;overflow:visible'><span style='margin-right:0px'>1776</span></div><div class='c' style='left:845px;top:513px;width:59.4px;height:16px;text-align:right;font-size:14px;line-height:14px;letter-spacing:-0.8px;color:#000;overflow:visible'><span style='margin-right:0px'>1.235908</span></div><div class='c' style='left:656px;top:534px;width:59.4px;height:16px;text-align:right;font-size:14px;line-height:14px;letter-spacing:-0.8px;color:#000;overflow:visible'><span style='margin-right:0px'>3628</span></div><div class='c' style='left:719px;top:535px;width:62px;height:16px;font-size:12px;line-height:12px;letter-spacing:1.0px;color:#000;text-indent:1.5px;-webkit-text-stroke:0.15px #000'>データホライ</div><div class='c' style='left:782px;top:534px;width:59.4px;height:16px;text-align:right;font-size:14px;line-height:14px;letter-spacing:-0.8px;color:#000;overflow:visible'><span style='margin-right:0px'>4815</span></div><div class='c' style='left:845px;top:534px;width:59.4px;height:16px;text-align:right;font-size:14px;line-height:14px;letter-spacing:-0.8px;color:#000;overflow:visible'><span style='margin-right:0px'>1.234615</span></div><div class='c' style='left:656px;top:555px;width:59.4px;height:16px;text-align:right;font-size:14px;line-height:14px;letter-spacing:-0.8px;color:#000;overflow:visible'><span style='margin-right:0px'>9829</span></div><div class='c' style='left:719px;top:556px;width:62px;height:16px;font-size:12px;line-height:12px;letter-spacing:1.0px;color:#000;text-indent:1.5px;-webkit-text-stroke:0.15px #000'>ながの東急</div><div class='c' style='left:782px;top:555px;width:59.4px;height:16px;text-align:right;font-size:14px;line-height:14px;letter-spacing:-0.8px;color:#000;overflow:visible'><span style='margin-right:0px'>1642</span></div><div class='c' style='left:845px;top:555px;width:59.4px;height:16px;text-align:right;font-size:14px;line-height:14px;letter-spacing:-0.8px;color:#000;overflow:visible'><span style='margin-right:0px'>1.234586</span></div><div class='c' style='left:656px;top:576px;width:59.4px;height:16px;text-align:right;font-size:14px;line-height:14px;letter-spacing:-0.8px;color:#000;overflow:visible'><span style='margin-right:0px'>7816</span></div><div class='c' style='left:719px;top:577px;width:62px;height:16px;font-size:12px;line-height:12px;letter-spacing:1.0px;color:#000;text-indent:1.5px;-webkit-text-stroke:0.15px #000'>スノーピーク</div><div class='c' style='left:782px;top:576px;width:59.4px;height:16px;text-align:right;font-size:14px;line-height:14px;letter-spacing:-0.8px;color:#000;overflow:visible'><span style='margin-right:0px'>3655</span></div><div class='c' style='left:845px;top:576px;width:59.4px;height:16px;text-align:right;font-size:14px;line-height:14px;letter-spacing:-0.8px;color:#000;overflow:visible'><span style='margin-right:0px'>1.23438</span></div><div class='c' style='left:656px;top:597px;width:59.4px;height:16px;text-align:right;font-size:14px;line-height:14px;letter-spacing:-0.8px;color:#000;overflow:visible'><span style='margin-right:0px'>7683</span></div><div class='c' style='left:719px;top:598px;width:62px;height:16px;font-size:12px;line-height:12px;letter-spacing:1.0px;color:#000;text-indent:1.5px;-webkit-text-stroke:0.15px #000'>ダブルエー</div><div class='c' style='left:782px;top:597px;width:59.4px;height:16px;text-align:right;font-size:14px;line-height:14px;letter-spacing:-0.8px;color:#000;overflow:visible'><span style='margin-right:0px'>3570</span></div><div class='c' style='left:845px;top:597px;width:59.4px;height:16px;text-align:right;font-size:14px;line-height:14px;letter-spacing:-0.8px;color:#000;overflow:visible'><span style='margin-right:0px'>1.233587</span></div><div class='c' style='left:656px;top:618px;width:59.4px;height:16px;text-align:right;font-size:14px;line-height:14px;letter-spacing:-0.8px;color:#000;overflow:visible'><span style='margin-right:0px'>4251</span></div><div class='c' style='left:719px;top:619px;width:62px;height:16px;font-size:12px;line-height:12px;letter-spacing:1.0px;color:#000;text-indent:1.5px;-webkit-text-stroke:0.15px #000'>恵和</div><div class='c' style='left:782px;top:618px;width:59.4px;height:16px;text-align:right;font-size:14px;line-height:14px;letter-spacing:-0.8px;color:#000;overflow:visible'><span style='margin-right:0px'>2515</span></div><div class='c' style='left:845px;top:618px;width:59.4px;height:16px;text-align:right;font-size:14px;line-height:14px;letter-spacing:-0.8px;color:#000;overflow:visible'><span style='margin-right:0px'>1.232843</span></div><div class='c' style='left:656px;top:639px;width:59.4px;height:16px;text-align:right;font-size:14px;line-height:14px;letter-spacing:-0.8px;color:#000;overflow:visible'><span style='margin-right:0px'>3556</span></div><div class='c' style='left:719px;top:640px;width:62px;height:16px;font-size:12px;line-height:12px;letter-spacing:1.0px;color:#000;text-indent:1.5px;-webkit-text-stroke:0.15px #000'>リネットジャ</div><div class='c' style='left:782px;top:639px;width:59.4px;height:16px;text-align:right;font-size:14px;line-height:14px;letter-spacing:-0.8px;color:#000;overflow:visible'><span style='margin-right:0px'>950</span></div><div class='c' style='left:845px;top:639px;width:59.4px;height:16px;text-align:right;font-size:14px;line-height:14px;letter-spacing:-0.8px;color:#000;overflow:visible'><span style='margin-right:0px'>1.232166</span></div><div class='c' style='left:656px;top:660px;width:59.4px;height:16px;text-align:right;font-size:14px;line-height:14px;letter-spacing:-0.8px;color:#000;overflow:visible'><span style='margin-right:0px'>2332</span></div><div class='c' style='left:719px;top:661px;width:62px;height:16px;font-size:12px;line-height:12px;letter-spacing:1.0px;color:#000;text-indent:1.5px;-webkit-text-stroke:0.15px #000'>クエスト</div><div class='c' style='left:782px;top:660px;width:59.4px;height:16px;text-align:right;font-size:14px;line-height:14px;letter-spacing:-0.8px;color:#000;overflow:visible'><span style='margin-right:0px'>1720</span></div><div class='c' style='left:845px;top:660px;width:59.4px;height:16px;text-align:right;font-size:14px;line-height:14px;letter-spacing:-0.8px;color:#000;overflow:visible'><span style='margin-right:0px'>1.22945</span></div><div class='c' style='left:656px;top:681px;width:59.4px;height:16px;text-align:right;font-size:14px;line-height:14px;letter-spacing:-0.8px;color:#000;overflow:visible'><span style='margin-right:0px'>6890</span></div><div class='c' style='left:719px;top:682px;width:62px;height:16px;font-size:12px;line-height:12px;letter-spacing:1.0px;color:#000;text-indent:1.5px;-webkit-text-stroke:0.15px #000'>フェローテック</div><div class='c' style='left:782px;top:681px;width:59.4px;height:16px;text-align:right;font-size:14px;line-height:14px;letter-spacing:-0.8px;color:#000;overflow:visible'><span style='margin-right:0px'>2556</span></div><div class='c' style='left:845px;top:681px;width:59.4px;height:16px;text-align:right;font-size:14px;line-height:14px;letter-spacing:-0.8px;color:#000;overflow:visible'><span style='margin-right:0px'>1.228256</span></div><div class='c' style='left:656px;top:702px;width:59.4px;height:16px;text-align:right;font-size:14px;line-height:14px;letter-spacing:-0.8px;color:#000;overflow:visible'><span style='margin-right:0px'>9104</span></div><div class='c' style='left:719px;top:703px;width:62px;height:16px;font-size:12px;line-height:12px;letter-spacing:1.0px;color:#000;text-indent:1.5px;-webkit-text-stroke:0.15px #000'>商船三井</div><div class='c' style='left:782px;top:702px;width:59.4px;height:16px;text-align:right;font-size:14px;line-height:14px;letter-spacing:-0.8px;color:#000;overflow:visible'><span style='margin-right:0px'>4120</span></div><div class='c' style='left:845px;top:702px;width:59.4px;height:16px;text-align:right;font-size:14px;line-height:14px;letter-spacing:-0.8px;color:#000;overflow:visible'><span style='margin-right:0px'>1.228018</span></div><div class='c' style='left:656px;top:723px;width:59.4px;height:16px;text-align:right;font-size:14px;line-height:14px;letter-spacing:-0.8px;color:#000;overflow:visible'><span style='margin-right:0px'>6627</span></div><div class='c' style='left:719px;top:724px;width:62px;height:16px;font-size:12px;line-height:12px;letter-spacing:1.0px;color:#000;text-indent:1.5px;-webkit-text-stroke:0.15px #000'>テラプローブ</div><div class='c' style='left:782px;top:723px;width:59.4px;height:16px;text-align:right;font-size:14px;line-height:14px;letter-spacing:-0.8px;color:#000;overflow:visible'><span style='margin-right:0px'>1266</span></div><div class='c' style='left:845px;top:723px;width:59.4px;height:16px;text-align:right;font-size:14px;line-height:14px;letter-spacing:-0.8px;color:#000;overflow:visible'><span style='margin-right:0px'>1.227934</span></div><div class='c' style='left:656px;top:744px;width:59.4px;height:16px;text-align:right;font-size:14px;line-height:14px;letter-spacing:-0.8px;color:#000;overflow:visible'><span style='margin-right:0px'>2678</span></div><div class='c' style='left:719px;top:745px;width:62px;height:16px;font-size:12px;line-height:12px;letter-spacing:1.0px;color:#000;text-indent:1.5px;-webkit-text-stroke:0.15px #000'>アスクル</div><div class='c' style='left:782px;top:744px;width:59.4px;height:16px;text-align:right;font-size:14px;line-height:14px;letter-spacing:-0.8px;color:#000;overflow:visible'><span style='margin-right:0px'>4125</span></div><div class='c' style='left:845px;top:744px;width:59.4px;height:16px;text-align:right;font-size:14px;line-height:14px;letter-spacing:-0.8px;color:#000;overflow:visible'><span style='margin-right:0px'>1.227679</span></div><div class='c' style='left:656px;top:765px;width:59.4px;height:16px;text-align:right;font-size:14px;line-height:14px;letter-spacing:-0.8px;color:#000;overflow:visible'><span style='margin-right:0px'>4424</span></div><div class='c' style='left:719px;top:766px;width:62px;height:16px;font-size:12px;line-height:12px;letter-spacing:1.0px;color:#000;text-indent:1.5px;-webkit-text-stroke:0.15px #000'>Ａｍａｚｉａ</div><div class='c' style='left:782px;top:765px;width:59.4px;height:16px;text-align:right;font-size:14px;line-height:14px;letter-spacing:-0.8px;color:#000;overflow:visible'><span style='margin-right:0px'>2185</span></div><div class='c' style='left:845px;top:765px;width:59.4px;height:16px;text-align:right;font-size:14px;line-height:14px;letter-spacing:-0.8px;color:#000;overflow:visible'><span style='margin-right:0px'>1.227528</span></div><div class='c' style='left:656px;top:786px;width:59.4px;height:16px;text-align:right;font-size:14px;line-height:14px;letter-spacing:-0.8px;color:#000;overflow:visible'><span style='margin-right:0px'>3916</span></div><div class='c' style='left:719px;top:787px;width:62px;height:16px;font-size:12px;line-height:12px;letter-spacing:1.0px;color:#000;text-indent:1.5px;-webkit-text-stroke:0.15px #000'>デジタル・イ</div><div class='c' style='left:782px;top:786px;width:59.4px;height:16px;text-align:right;font-size:14px;line-height:14px;letter-spacing:-0.8px;color:#000;overflow:visible'><span style='margin-right:0px'>2151</span></div><div class='c' style='left:845px;top:786px;width:59.4px;height:16px;text-align:right;font-size:14px;line-height:14px;letter-spacing:-0.8px;color:#000;overflow:visible'><span style='margin-right:0px'>1.227039</span></div><div class='c' style='left:656px;top:807px;width:59.4px;height:16px;text-align:right;font-size:14px;line-height:14px;letter-spacing:-0.8px;color:#000;overflow:visible'><span style='margin-right:0px'>3464</span></div><div class='c' style='left:719px;top:808px;width:62px;height:16px;font-size:12px;line-height:12px;letter-spacing:1.0px;color:#000;text-indent:1.5px;-webkit-text-stroke:0.15px #000'>プロパティ</div><div class='c' style='left:782px;top:807px;width:59.4px;height:16px;text-align:right;font-size:14px;line-height:14px;letter-spacing:-0.8px;color:#000;overflow:visible'><span style='margin-right:0px'>2243</span></div><div class='c' style='left:845px;top:807px;width:59.4px;height:16px;text-align:right;font-size:14px;line-height:14px;letter-spacing:-0.8px;color:#000;overflow:visible'><span style='margin-right:0px'>1.227024</span></div><div class='c' style='left:656px;top:828px;width:59.4px;height:16px;text-align:right;font-size:14px;line-height:14px;letter-spacing:-0.8px;color:#000;overflow:visible'><span style='margin-right:0px'>2374</span></div><div class='c' style='left:719px;top:829px;width:62px;height:16px;font-size:12px;line-height:12px;letter-spacing:1.0px;color:#000;text-indent:1.5px;-webkit-text-stroke:0.15px #000'>セントケア</div><div class='c' style='left:782px;top:828px;width:59.4px;height:16px;text-align:right;font-size:14px;line-height:14px;letter-spacing:-0.8px;color:#000;overflow:visible'><span style='margin-right:0px'>1266</span></div><div class='c' style='left:845px;top:828px;width:59.4px;height:16px;text-align:right;font-size:14px;line-height:14px;letter-spacing:-0.8px;color:#000;overflow:visible'><span style='margin-right:0px'>1.225557</span></div><div class='c' style='left:656px;top:849px;width:59.4px;height:16px;text-align:right;font-size:14px;line-height:14px;letter-spacing:-0.8px;color:#000;overflow:visible'><span style='margin-right:0px'>6615</span></div><div class='c' style='left:719px;top:850px;width:62px;height:16px;font-size:12px;line-height:12px;letter-spacing:1.0px;color:#000;text-indent:1.5px;-webkit-text-stroke:0.15px #000'>ユー・エム</div><div class='c' style='left:782px;top:849px;width:59.4px;height:16px;text-align:right;font-size:14px;line-height:14px;letter-spacing:-0.8px;color:#000;overflow:visible'><span style='margin-right:0px'>1029</span></div><div class='c' style='left:845px;top:849px;width:59.4px;height:16px;text-align:right;font-size:14px;line-height:14px;letter-spacing:-0.8px;color:#000;overflow:visible'><span style='margin-right:0px'>1.223543</span></div><div class='c' style='left:656px;top:870px;width:59.4px;height:16px;text-align:right;font-size:14px;line-height:14px;letter-spacing:-0.8px;color:#000;overflow:visible'><span style='margin-right:0px'>9270</span></div><div class='c' style='left:719px;top:871px;width:62px;height:16px;font-size:12px;line-height:12px;letter-spacing:1.0px;color:#000;text-indent:1.5px;-webkit-text-stroke:0.15px #000'>バリュエンス</div><div class='c' style='left:782px;top:870px;width:59.4px;height:16px;text-align:right;font-size:14px;line-height:14px;letter-spacing:-0.8px;color:#000;overflow:visible'><span style='margin-right:0px'>2905</span></div><div class='c' style='left:845px;top:870px;width:59.4px;height:16px;text-align:right;font-size:14px;line-height:14px;letter-spacing:-0.8px;color:#000;overflow:visible'><span style='margin-right:0px'>1.222643</span></div><div class='c' style='left:656px;top:891px;width:59.4px;height:16px;text-align:right;font-size:14px;line-height:14px;letter-spacing:-0.8px;color:#000;overflow:visible'><span style='margin-right:0px'>3919</span></div><div class='c' style='left:719px;top:892px;width:62px;height:16px;font-size:12px;line-height:12px;letter-spacing:1.0px;color:#000;text-indent:1.5px;-webkit-text-stroke:0.15px #000'>パイプドＨＤ</div><div class='c' style='left:782px;top:891px;width:59.4px;height:16px;text-align:right;font-size:14px;line-height:14px;letter-spacing:-0.8px;color:#000;overflow:visible'><span style='margin-right:0px'>1881</span></div><div class='c' style='left:845px;top:891px;width:59.4px;height:16px;text-align:right;font-size:14px;line-height:14px;letter-spacing:-0.8px;color:#000;overflow:visible'><span style='margin-right:0px'>1.221429</span></div><div class='c' style='left:656px;top:912px;width:59.4px;height:16px;text-align:right;font-size:14px;line-height:14px;letter-spacing:-0.8px;color:#000;overflow:visible'><span style='margin-right:0px'>2901</span></div><div class='c' style='left:719px;top:913px;width:62px;height:16px;font-size:12px;line-height:12px;letter-spacing:1.0px;color:#000;text-indent:1.5px;-webkit-text-stroke:0.15px #000'>石垣食品</div><div class='c' style='left:782px;top:912px;width:59.4px;height:16px;text-align:right;font-size:14px;line-height:14px;letter-spacing:-0.8px;color:#000;overflow:visible'><span style='margin-right:0px'>139</span></div><div class='c' style='left:845px;top:912px;width:59.4px;height:16px;text-align:right;font-size:14px;line-height:14px;letter-spacing:-0.8px;color:#000;overflow:visible'><span style='margin-right:0px'>1.219298</span></div><div class='c' style='left:656px;top:933px;width:59.4px;height:16px;text-align:right;font-size:14px;line-height:14px;letter-spacing:-0.8px;color:#000;overflow:visible'><span style='margin-right:0px'>1407</span></div><div class='c' style='left:719px;top:934px;width:62px;height:16px;font-size:12px;line-height:12px;letter-spacing:1.0px;color:#000;text-indent:1.5px;-webkit-text-stroke:0.15px #000'>ウエストホール</div><div class='c' style='left:782px;top:933px;width:59.4px;height:16px;text-align:right;font-size:14px;line-height:14px;letter-spacing:-0.8px;color:#000;overflow:visible'><span style='margin-right:0px'>3565</span></div><div class='c' style='left:845px;top:933px;width:59.4px;height:16px;text-align:right;font-size:14px;line-height:14px;letter-spacing:-0.8px;color:#000;overflow:visible'><span style='margin-right:0px'>1.21922</span></div><div class='c' style='left:656px;top:954px;width:59.4px;height:16px;text-align:right;font-size:14px;line-height:14px;letter-spacing:-0.8px;color:#000;overflow:visible'><span style='margin-right:0px'>5384</span></div><div class='c' style='left:719px;top:955px;width:62px;height:16px;font-size:12px;line-height:12px;letter-spacing:1.0px;color:#000;text-indent:1.5px;-webkit-text-stroke:0.15px #000'>フジミインコ</div><div class='c' style='left:782px;top:954px;width:59.4px;height:16px;text-align:right;font-size:14px;line-height:14px;letter-spacing:-0.8px;color:#000;overflow:visible'><span style='margin-right:0px'>4600</span></div><div class='c' style='left:845px;top:954px;width:59.4px;height:16px;text-align:right;font-size:14px;line-height:14px;letter-spacing:-0.8px;color:#000;overflow:visible'><span style='margin-right:0px'>1.218543</span></div><div class='c' style='left:1286px;top:282px;width:59.4px;height:16px;text-align:right;font-size:14px;line-height:14px;letter-spacing:-0.8px;color:#000;overflow:visible'><span style='margin-right:0px'>9829</span></div><div class='c' style='left:1349px;top:283px;width:62px;height:16px;font-size:12px;line-height:12px;letter-spacing:1.0px;color:#000;text-indent:1.5px;-webkit-text-stroke:0.15px #000'>ながの東急</div><div class='c' style='left:1412px;top:282px;width:59.4px;height:16px;text-align:right;font-size:14px;line-height:14px;letter-spacing:-0.8px;color:#000;overflow:visible'><span style='margin-right:0px'>1642</span></div><div class='c' style='left:1475px;top:282px;width:59.4px;height:16px;text-align:right;font-size:14px;line-height:14px;letter-spacing:-0.8px;color:#000;overflow:visible'><span style='margin-right:0px'>1.234586</span></div><div class='c' style='left:1286px;top:303px;width:59.4px;height:16px;text-align:right;font-size:14px;line-height:14px;letter-spacing:-0.8px;color:#000;overflow:visible'><span style='margin-right:0px'>4736</span></div><div class='c' style='left:1349px;top:304px;width:62px;height:16px;font-size:12px;line-height:12px;letter-spacing:1.0px;color:#000;text-indent:1.5px;-webkit-text-stroke:0.15px #000'>日本ラッド</div><div class='c' style='left:1412px;top:303px;width:59.4px;height:16px;text-align:right;font-size:14px;line-height:14px;letter-spacing:-0.8px;color:#000;overflow:visible'><span style='margin-right:0px'>759</span></div><div class='c' style='left:1475px;top:303px;width:59.4px;height:16px;text-align:right;font-size:14px;line-height:14px;letter-spacing:-0.8px;color:#000;overflow:visible'><span style='margin-right:0px'>1.234146</span></div><div class='c' style='left:1286px;top:324px;width:59.4px;height:16px;text-align:right;font-size:14px;line-height:14px;letter-spacing:-0.8px;color:#000;overflow:visible'><span style='margin-right:0px'>9073</span></div><div class='c' style='left:1349px;top:325px;width:62px;height:16px;font-size:12px;line-height:12px;letter-spacing:1.0px;color:#000;text-indent:1.5px;-webkit-text-stroke:0.15px #000'>京極運輸商事</div><div class='c' style='left:1412px;top:324px;width:59.4px;height:16px;text-align:right;font-size:14px;line-height:14px;letter-spacing:-0.8px;color:#000;overflow:visible'><span style='margin-right:0px'>639</span></div><div class='c' style='left:1475px;top:324px;width:59.4px;height:16px;text-align:right;font-size:14px;line-height:14px;letter-spacing:-0.8px;color:#000;overflow:visible'><span style='margin-right:0px'>1.233591</span></div><div class='c' style='left:1286px;top:345px;width:59.4px;height:16px;text-align:right;font-size:14px;line-height:14px;letter-spacing:-0.8px;color:#000;overflow:visible'><span style='margin-right:0px'>4592</span></div><div class='c' style='left:1349px;top:346px;width:62px;height:16px;font-size:12px;line-height:12px;letter-spacing:1.0px;color:#000;text-indent:1.5px;-webkit-text-stroke:0.15px #000'>サンバイオ</div><div class='c' style='left:1412px;top:345px;width:59.4px;height:16px;text-align:right;font-size:14px;line-height:14px;letter-spacing:-0.8px;color:#000;overflow:visible'><span style='margin-right:0px'>1812</span></div><div class='c' style='left:1475px;top:345px;width:59.4px;height:16px;text-align:right;font-size:14px;line-height:14px;letter-spacing:-0.8px;color:#000;overflow:visible'><span style='margin-right:0px'>1.232653</span></div><div class='c' style='left:1286px;top:366px;width:59.4px;height:16px;text-align:right;font-size:14px;line-height:14px;letter-spacing:-0.8px;color:#000;overflow:visible'><span style='margin-right:0px'>6199</span></div><div class='c' style='left:1349px;top:367px;width:62px;height:16px;font-size:12px;line-height:12px;letter-spacing:1.0px;color:#000;text-indent:1.5px;-webkit-text-stroke:0.15px #000'>セラク</div><div class='c' style='left:1412px;top:366px;width:59.4px;height:16px;text-align:right;font-size:14px;line-height:14px;letter-spacing:-0.8px;color:#000;overflow:visible'><span style='margin-right:0px'>2038</span></div><div class='c' style='left:1475px;top:366px;width:59.4px;height:16px;text-align:right;font-size:14px;line-height:14px;letter-spacing:-0.8px;color:#000;overflow:visible'><span style='margin-right:0px'>1.232164</span></div><div class='c' style='left:1286px;top:387px;width:59.4px;height:16px;text-align:right;font-size:14px;line-height:14px;letter-spacing:-0.8px;color:#000;overflow:visible'><span style='margin-right:0px'>6315</span></div><div class='c' style='left:1349px;top:388px;width:62px;height:16px;font-size:12px;line-height:12px;letter-spacing:1.0px;color:#000;text-indent:1.5px;-webkit-text-stroke:0.15px #000'>ＴＯＷＡ</div><div class='c' style='left:1412px;top:387px;width:59.4px;height:16px;text-align:right;font-size:14px;line-height:14px;letter-spacing:-0.8px;color:#000;overflow:visible'><span style='margin-right:0px'>2317</span></div><div class='c' style='left:1475px;top:387px;width:59.4px;height:16px;text-align:right;font-size:14px;line-height:14px;letter-spacing:-0.8px;color:#000;overflow:visible'><span style='margin-right:0px'>1.231792</span></div><div class='c' style='left:1286px;top:408px;width:59.4px;height:16px;text-align:right;font-size:14px;line-height:14px;letter-spacing:-0.8px;color:#000;overflow:visible'><span style='margin-right:0px'>6557</span></div><div class='c' style='left:1349px;top:409px;width:62px;height:16px;font-size:12px;line-height:12px;letter-spacing:1.0px;color:#000;text-indent:1.5px;-webkit-text-stroke:0.15px #000'>ｇｌｏｂａｌ</div><div class='c' style='left:1412px;top:408px;width:59.4px;height:16px;text-align:right;font-size:14px;line-height:14px;letter-spacing:-0.8px;color:#000;overflow:visible'><span style='margin-right:0px'>1181</span></div><div class='c' style='left:1475px;top:408px;width:59.4px;height:16px;text-align:right;font-size:14px;line-height:14px;letter-spacing:-0.8px;color:#000;overflow:visible'><span style='margin-right:0px'>1.231491</span></div><div class='c' style='left:1286px;top:429px;width:59.4px;height:16px;text-align:right;font-size:14px;line-height:14px;letter-spacing:-0.8px;color:#000;overflow:visible'><span style='margin-right:0px'>4431</span></div><div class='c' style='left:1349px;top:430px;width:62px;height:16px;font-size:12px;line-height:12px;letter-spacing:1.0px;color:#000;text-indent:1.5px;-webkit-text-stroke:0.15px #000'>スマレジ</div><div class='c' style='left:1412px;top:429px;width:59.4px;height:16px;text-align:right;font-size:14px;line-height:14px;letter-spacing:-0.8px;color:#000;overflow:visible'><span style='margin-right:0px'>5850</span></div><div class='c' style='left:1475px;top:429px;width:59.4px;height:16px;text-align:right;font-size:14px;line-height:14px;letter-spacing:-0.8px;color:#000;overflow:visible'><span style='margin-right:0px'>1.230284</span></div><div class='c' style='left:1286px;top:450px;width:59.4px;height:16px;text-align:right;font-size:14px;line-height:14px;letter-spacing:-0.8px;color:#000;overflow:visible'><span style='margin-right:0px'>5817</span></div><div class='c' style='left:1349px;top:451px;width:62px;height:16px;font-size:12px;line-height:12px;letter-spacing:1.0px;color:#000;text-indent:1.5px;-webkit-text-stroke:0.15px #000'>ＪＭＡＣＳ</div><div class='c' style='left:1412px;top:450px;width:59.4px;height:16px;text-align:right;font-size:14px;line-height:14px;letter-spacing:-0.8px;color:#000;overflow:visible'><span style='margin-right:0px'>559</span></div><div class='c' style='left:1475px;top:450px;width:59.4px;height:16px;text-align:right;font-size:14px;line-height:14px;letter-spacing:-0.8px;color:#000;overflow:visible'><span style='margin-right:0px'>1.228571</span></div><div class='c' style='left:1286px;top:471px;width:59.4px;height:16px;text-align:right;font-size:14px;line-height:14px;letter-spacing:-0.8px;color:#000;overflow:visible'><span style='margin-right:0px'>8155</span></div><div class='c' style='left:1349px;top:472px;width:62px;height:16px;font-size:12px;line-height:12px;letter-spacing:1.0px;color:#000;text-indent:1.5px;-webkit-text-stroke:0.15px #000'>三益半導体</div><div class='c' style='left:1412px;top:471px;width:59.4px;height:16px;text-align:right;font-size:14px;line-height:14px;letter-spacing:-0.8px;color:#000;overflow:visible'><span style='margin-right:0px'>3030</span></div><div class='c' style='left:1475px;top:471px;width:59.4px;height:16px;text-align:right;font-size:14px;line-height:14px;letter-spacing:-0.8px;color:#000;overflow:visible'><span style='margin-right:0px'>1.227715</span></div><div class='c' style='left:1286px;top:492px;width:59.4px;height:16px;text-align:right;font-size:14px;line-height:14px;letter-spacing:-0.8px;color:#000;overflow:visible'><span style='margin-right:0px'>4598</span></div><div class='c' style='left:1349px;top:493px;width:62px;height:16px;font-size:12px;line-height:12px;letter-spacing:1.0px;color:#000;text-indent:1.5px;-webkit-text-stroke:0.15px #000'>Ｄｅｌｔａ</div><div class='c' style='left:1412px;top:492px;width:59.4px;height:16px;text-align:right;font-size:14px;line-height:14px;letter-spacing:-0.8px;color:#000;overflow:visible'><span style='margin-right:0px'>1313</span></div><div class='c' style='left:1475px;top:492px;width:59.4px;height:16px;text-align:right;font-size:14px;line-height:14px;letter-spacing:-0.8px;color:#000;overflow:visible'><span style='margin-right:0px'>1.227103</span></div><div class='c' style='left:1286px;top:513px;width:59.4px;height:16px;text-align:right;font-size:14px;line-height:14px;letter-spacing:-0.8px;color:#000;overflow:visible'><span style='margin-right:0px'>4082</span></div><div class='c' style='left:1349px;top:514px;width:62px;height:16px;font-size:12px;line-height:12px;letter-spacing:1.0px;color:#000;text-indent:1.5px;-webkit-text-stroke:0.15px #000'>第一稀元素</div><div class='c' style='left:1412px;top:513px;width:59.4px;height:16px;text-align:right;font-size:14px;line-height:14px;letter-spacing:-0.8px;color:#000;overflow:visible'><span style='margin-right:0px'>1391</span></div><div class='c' style='left:1475px;top:513px;width:59.4px;height:16px;text-align:right;font-size:14px;line-height:14px;letter-spacing:-0.8px;color:#000;overflow:visible'><span style='margin-right:0px'>1.226631</span></div><div class='c' style='left:1286px;top:534px;width:59.4px;height:16px;text-align:right;font-size:14px;line-height:14px;letter-spacing:-0.8px;color:#000;overflow:visible'><span style='margin-right:0px'>4735</span></div><div class='c' style='left:1349px;top:535px;width:62px;height:16px;font-size:12px;line-height:12px;letter-spacing:1.0px;color:#000;text-indent:1.5px;-webkit-text-stroke:0.15px #000'>京進</div><div class='c' style='left:1412px;top:534px;width:59.4px;height:16px;text-align:right;font-size:14px;line-height:14px;letter-spacing:-0.8px;color:#000;overflow:visible'><span style='margin-right:0px'>645</span></div><div class='c' style='left:1475px;top:534px;width:59.4px;height:16px;text-align:right;font-size:14px;line-height:14px;letter-spacing:-0.8px;color:#000;overflow:visible'><span style='margin-right:0px'>1.226236</span></div><div class='c' style='left:1286px;top:555px;width:59.4px;height:16px;text-align:right;font-size:14px;line-height:14px;letter-spacing:-0.8px;color:#000;overflow:visible'><span style='margin-right:0px'>6721</span></div><div class='c' style='left:1349px;top:556px;width:62px;height:16px;font-size:12px;line-height:12px;letter-spacing:1.0px;color:#000;text-indent:1.5px;-webkit-text-stroke:0.15px #000'>ウインテスト</div><div class='c' style='left:1412px;top:555px;width:59.4px;height:16px;text-align:right;font-size:14px;line-height:14px;letter-spacing:-0.8px;color:#000;overflow:visible'><span style='margin-right:0px'>332</span></div><div class='c' style='left:1475px;top:555px;width:59.4px;height:16px;text-align:right;font-size:14px;line-height:14px;letter-spacing:-0.8px;color:#000;overflow:visible'><span style='margin-right:0px'>1.225092</span></div><div class='c' style='left:1286px;top:576px;width:59.4px;height:16px;text-align:right;font-size:14px;line-height:14px;letter-spacing:-0.8px;color:#000;overflow:visible'><span style='margin-right:0px'>2780</span></div><div class='c' style='left:1349px;top:577px;width:62px;height:16px;font-size:12px;line-height:12px;letter-spacing:1.0px;color:#000;text-indent:1.5px;-webkit-text-stroke:0.15px #000'>コメ兵</div><div class='c' style='left:1412px;top:576px;width:59.4px;height:16px;text-align:right;font-size:14px;line-height:14px;letter-spacing:-0.8px;color:#000;overflow:visible'><span style='margin-right:0px'>1098</span></div><div class='c' style='left:1475px;top:576px;width:59.4px;height:16px;text-align:right;font-size:14px;line-height:14px;letter-spacing:-0.8px;color:#000;overflow:visible'><span style='margin-right:0px'>1.22408</span></div><div class='c' style='left:1286px;top:597px;width:59.4px;height:16px;text-align:right;font-size:14px;line-height:14px;letter-spacing:-0.8px;color:#000;overflow:visible'><span style='margin-right:0px'>6951</span></div><div class='c' style='left:1349px;top:598px;width:62px;height:16px;font-size:12px;line-height:12px;letter-spacing:1.0px;color:#000;text-indent:1.5px;-webkit-text-stroke:0.15px #000'>日本電子</div><div class='c' style='left:1412px;top:597px;width:59.4px;height:16px;text-align:right;font-size:14px;line-height:14px;letter-spacing:-0.8px;color:#000;overflow:visible'><span style='margin-right:0px'>4620</span></div><div class='c' style='left:1475px;top:597px;width:59.4px;height:16px;text-align:right;font-size:14px;line-height:14px;letter-spacing:-0.8px;color:#000;overflow:visible'><span style='margin-right:0px'>1.223841</span></div><div class='c' style='left:1286px;top:618px;width:59.4px;height:16px;text-align:right;font-size:14px;line-height:14px;letter-spacing:-0.8px;color:#000;overflow:visible'><span style='margin-right:0px'>7694</span></div><div class='c' style='left:1349px;top:619px;width:62px;height:16px;font-size:12px;line-height:12px;letter-spacing:1.0px;color:#000;text-indent:1.5px;-webkit-text-stroke:0.15px #000'>いつも</div><div class='c' style='left:1412px;top:618px;width:59.4px;height:16px;text-align:right;font-size:14px;line-height:14px;letter-spacing:-0.8px;color:#000;overflow:visible'><span style='margin-right:0px'>4325</span></div><div class='c' style='left:1475px;top:618px;width:59.4px;height:16px;text-align:right;font-size:14px;line-height:14px;letter-spacing:-0.8px;color:#000;overflow:visible'><span style='margin-right:0px'>1.223479</span></div><div class='c' style='left:1286px;top:639px;width:59.4px;height:16px;text-align:right;font-size:14px;line-height:14px;letter-spacing:-0.8px;color:#000;overflow:visible'><span style='margin-right:0px'>4933</span></div><div class='c' style='left:1349px;top:640px;width:62px;height:16px;font-size:12px;line-height:12px;letter-spacing:1.0px;color:#000;text-indent:1.5px;-webkit-text-stroke:0.15px #000'>Ｉ－ｎｅ</div><div class='c' style='left:1412px;top:639px;width:59.4px;height:16px;text-align:right;font-size:14px;line-height:14px;letter-spacing:-0.8px;color:#000;overflow:visible'><span style='margin-right:0px'>3915</span></div><div class='c' style='left:1475px;top:639px;width:59.4px;height:16px;text-align:right;font-size:14px;line-height:14px;letter-spacing:-0.8px;color:#000;overflow:visible'><span style='margin-right:0px'>1.223438</span></div><div class='c' style='left:1286px;top:660px;width:59.4px;height:16px;text-align:right;font-size:14px;line-height:14px;letter-spacing:-0.8px;color:#000;overflow:visible'><span style='margin-right:0px'>4437</span></div><div class='c' style='left:1349px;top:661px;width:62px;height:16px;font-size:12px;line-height:12px;letter-spacing:1.0px;color:#000;text-indent:1.5px;-webkit-text-stroke:0.15px #000'>ｇｏｏｄｄａｙｓ</div><div class='c' style='left:1412px;top:660px;width:59.4px;height:16px;text-align:right;font-size:14px;line-height:14px;letter-spacing:-0.8px;color:#000;overflow:visible'><span style='margin-right:0px'>1126</span></div><div class='c' style='left:1475px;top:660px;width:59.4px;height:16px;text-align:right;font-size:14px;line-height:14px;letter-spacing:-0.8px;color:#000;overflow:visible'><span style='margin-right:0px'>1.222584</span></div><div class='c' style='left:1286px;top:681px;width:59.4px;height:16px;text-align:right;font-size:14px;line-height:14px;letter-spacing:-0.8px;color:#000;overflow:visible'><span style='margin-right:0px'>4186</span></div><div class='c' style='left:1349px;top:682px;width:62px;height:16px;font-size:12px;line-height:12px;letter-spacing:1.0px;color:#000;text-indent:1.5px;-webkit-text-stroke:0.15px #000'>東京応化工業</div><div class='c' style='left:1412px;top:681px;width:59.4px;height:16px;text-align:right;font-size:14px;line-height:14px;letter-spacing:-0.8px;color:#000;overflow:visible'><span style='margin-right:0px'>7450</span></div><div class='c' style='left:1475px;top:681px;width:59.4px;height:16px;text-align:right;font-size:14px;line-height:14px;letter-spacing:-0.8px;color:#000;overflow:visible'><span style='margin-right:0px'>1.221311</span></div><div class='c' style='left:1286px;top:702px;width:59.4px;height:16px;text-align:right;font-size:14px;line-height:14px;letter-spacing:-0.8px;color:#000;overflow:visible'><span style='margin-right:0px'>3498</span></div><div class='c' style='left:1349px;top:703px;width:62px;height:16px;font-size:12px;line-height:12px;letter-spacing:1.0px;color:#000;text-indent:1.5px;-webkit-text-stroke:0.15px #000'>霞ヶ関キャピ</div><div class='c' style='left:1412px;top:702px;width:59.4px;height:16px;text-align:right;font-size:14px;line-height:14px;letter-spacing:-0.8px;color:#000;overflow:visible'><span style='margin-right:0px'>4870</span></div><div class='c' style='left:1475px;top:702px;width:59.4px;height:16px;text-align:right;font-size:14px;line-height:14px;letter-spacing:-0.8px;color:#000;overflow:visible'><span style='margin-right:0px'>1.220551</span></div><div class='c' style='left:1286px;top:723px;width:59.4px;height:16px;text-align:right;font-size:14px;line-height:14px;letter-spacing:-0.8px;color:#000;overflow:visible'><span style='margin-right:0px'>9363</span></div><div class='c' style='left:1349px;top:724px;width:62px;height:16px;font-size:12px;line-height:12px;letter-spacing:1.0px;color:#000;text-indent:1.5px;-webkit-text-stroke:0.15px #000'>大運</div><div class='c' style='left:1412px;top:723px;width:59.4px;height:16px;text-align:right;font-size:14px;line-height:14px;letter-spacing:-0.8px;color:#000;overflow:visible'><span style='margin-right:0px'>321</span></div><div class='c' style='left:1475px;top:723px;width:59.4px;height:16px;text-align:right;font-size:14px;line-height:14px;letter-spacing:-0.8px;color:#000;overflow:visible'><span style='margin-right:0px'>1.220532</span></div><div class='c' style='left:1286px;top:744px;width:59.4px;height:16px;text-align:right;font-size:14px;line-height:14px;letter-spacing:-0.8px;color:#000;overflow:visible'><span style='margin-right:0px'>6235</span></div><div class='c' style='left:1349px;top:745px;width:62px;height:16px;font-size:12px;line-height:12px;letter-spacing:1.0px;color:#000;text-indent:1.5px;-webkit-text-stroke:0.15px #000'>オプトラン</div><div class='c' style='left:1412px;top:744px;width:59.4px;height:16px;text-align:right;font-size:14px;line-height:14px;letter-spacing:-0.8px;color:#000;overflow:visible'><span style='margin-right:0px'>2956</span></div><div class='c' style='left:1475px;top:744px;width:59.4px;height:16px;text-align:right;font-size:14px;line-height:14px;letter-spacing:-0.8px;color:#000;overflow:visible'><span style='margin-right:0px'>1.220479</span></div><div class='c' style='left:1286px;top:765px;width:59.4px;height:16px;text-align:right;font-size:14px;line-height:14px;letter-spacing:-0.8px;color:#000;overflow:visible'><span style='margin-right:0px'>7360</span></div><div class='c' style='left:1349px;top:766px;width:62px;height:16px;font-size:12px;line-height:12px;letter-spacing:1.0px;color:#000;text-indent:1.5px;-webkit-text-stroke:0.15px #000'>オンデック</div><div class='c' style='left:1412px;top:765px;width:59.4px;height:16px;text-align:right;font-size:14px;line-height:14px;letter-spacing:-0.8px;color:#000;overflow:visible'><span style='margin-right:0px'>4235</span></div><div class='c' style='left:1475px;top:765px;width:59.4px;height:16px;text-align:right;font-size:14px;line-height:14px;letter-spacing:-0.8px;color:#000;overflow:visible'><span style='margin-right:0px'>1.220461</span></div><div class='c' style='left:1286px;top:786px;width:59.4px;height:16px;text-align:right;font-size:14px;line-height:14px;letter-spacing:-0.8px;color:#000;overflow:visible'><span style='margin-right:0px'>4060</span></div><div class='c' style='left:1349px;top:787px;width:62px;height:16px;font-size:12px;line-height:12px;letter-spacing:1.0px;color:#000;text-indent:1.5px;-webkit-text-stroke:0.15px #000'>ｒａｋｕｍｏ</div><div class='c' style='left:1412px;top:786px;width:59.4px;height:16px;text-align:right;font-size:14px;line-height:14px;letter-spacing:-0.8px;color:#000;overflow:visible'><span style='margin-right:0px'>2418</span></div><div class='c' style='left:1475px;top:786px;width:59.4px;height:16px;text-align:right;font-size:14px;line-height:14px;letter-spacing:-0.8px;color:#000;overflow:visible'><span style='margin-right:0px'>1.21998</span></div><div class='c' style='left:1286px;top:807px;width:59.4px;height:16px;text-align:right;font-size:14px;line-height:14px;letter-spacing:-0.8px;color:#000;overflow:visible'><span style='margin-right:0px'>6086</span></div><div class='c' style='left:1349px;top:808px;width:62px;height:16px;font-size:12px;line-height:12px;letter-spacing:1.0px;color:#000;text-indent:1.5px;-webkit-text-stroke:0.15px #000'>シンメンテ</div><div class='c' style='left:1412px;top:807px;width:59.4px;height:16px;text-align:right;font-size:14px;line-height:14px;letter-spacing:-0.8px;color:#000;overflow:visible'><span style='margin-right:0px'>982</span></div><div class='c' style='left:1475px;top:807px;width:59.4px;height:16px;text-align:right;font-size:14px;line-height:14px;letter-spacing:-0.8px;color:#000;overflow:visible'><span style='margin-right:0px'>1.219876</span></div><div class='c' style='left:1286px;top:828px;width:59.4px;height:16px;text-align:right;font-size:14px;line-height:14px;letter-spacing:-0.8px;color:#000;overflow:visible'><span style='margin-right:0px'>1543</span></div><div class='c' style='left:1349px;top:829px;width:62px;height:16px;font-size:12px;line-height:12px;letter-spacing:1.0px;color:#000;text-indent:1.5px;-webkit-text-stroke:0.15px #000'>純パラジウム</div><div class='c' style='left:1412px;top:828px;width:59.4px;height:16px;text-align:right;font-size:14px;line-height:14px;letter-spacing:-0.8px;color:#000;overflow:visible'><span style='margin-right:0px'>86400</span></div><div class='c' style='left:1475px;top:828px;width:59.4px;height:16px;text-align:right;font-size:14px;line-height:14px;letter-spacing:-0.8px;color:#000;overflow:visible'><span style='margin-right:0px'>1.218618</span></div><div class='c' style='left:1286px;top:849px;width:59.4px;height:16px;text-align:right;font-size:14px;line-height:14px;letter-spacing:-0.8px;color:#000;overflow:visible'><span style='margin-right:0px'>2901</span></div><div class='c' style='left:1349px;top:850px;width:62px;height:16px;font-size:12px;line-height:12px;letter-spacing:1.0px;color:#000;text-indent:1.5px;-webkit-text-stroke:0.15px #000'>石垣食品</div><div class='c' style='left:1412px;top:849px;width:59.4px;height:16px;text-align:right;font-size:14px;line-height:14px;letter-spacing:-0.8px;color:#000;overflow:visible'><span style='margin-right:0px'>140</span></div><div class='c' style='left:1475px;top:849px;width:59.4px;height:16px;text-align:right;font-size:14px;line-height:14px;letter-spacing:-0.8px;color:#000;overflow:visible'><span style='margin-right:0px'>1.217391</span></div><div class='c' style='left:1286px;top:870px;width:59.4px;height:16px;text-align:right;font-size:14px;line-height:14px;letter-spacing:-0.8px;color:#000;overflow:visible'><span style='margin-right:0px'>3524</span></div><div class='c' style='left:1349px;top:871px;width:62px;height:16px;font-size:12px;line-height:12px;letter-spacing:1.0px;color:#000;text-indent:1.5px;-webkit-text-stroke:0.15px #000'>日東製網</div><div class='c' style='left:1412px;top:870px;width:59.4px;height:16px;text-align:right;font-size:14px;line-height:14px;letter-spacing:-0.8px;color:#000;overflow:visible'><span style='margin-right:0px'>1937</span></div><div class='c' style='left:1475px;top:870px;width:59.4px;height:16px;text-align:right;font-size:14px;line-height:14px;letter-spacing:-0.8px;color:#000;overflow:visible'><span style='margin-right:0px'>1.215945</span></div><div class='c' style='left:1286px;top:891px;width:59.4px;height:16px;text-align:right;font-size:14px;line-height:14px;letter-spacing:-0.8px;color:#000;overflow:visible'><span style='margin-right:0px'>2986</span></div><div class='c' style='left:1349px;top:892px;width:62px;height:16px;font-size:12px;line-height:12px;letter-spacing:1.0px;color:#000;text-indent:1.5px;-webkit-text-stroke:0.15px #000'>ＬＡホールデ</div><div class='c' style='left:1412px;top:891px;width:59.4px;height:16px;text-align:right;font-size:14px;line-height:14px;letter-spacing:-0.8px;color:#000;overflow:visible'><span style='margin-right:0px'>1470</span></div><div class='c' style='left:1475px;top:891px;width:59.4px;height:16px;text-align:right;font-size:14px;line-height:14px;letter-spacing:-0.8px;color:#000;overflow:visible'><span style='margin-right:0px'>1.215881</span></div><div class='c' style='left:1286px;top:912px;width:59.4px;height:16px;text-align:right;font-size:14px;line-height:14px;letter-spacing:-0.8px;color:#000;overflow:visible'><span style='margin-right:0px'>3836</span></div><div class='c' style='left:1349px;top:913px;width:62px;height:16px;font-size:12px;line-height:12px;letter-spacing:1.0px;color:#000;text-indent:1.5px;-webkit-text-stroke:0.15px #000'>アバント</div><div class='c' style='left:1412px;top:912px;width:59.4px;height:16px;text-align:right;font-size:14px;line-height:14px;letter-spacing:-0.8px;color:#000;overflow:visible'><span style='margin-right:0px'>1748</span></div><div class='c' style='left:1475px;top:912px;width:59.4px;height:16px;text-align:right;font-size:14px;line-height:14px;letter-spacing:-0.8px;color:#000;overflow:visible'><span style='margin-right:0px'>1.215577</span></div><div class='c' style='left:1286px;top:933px;width:59.4px;height:16px;text-align:right;font-size:14px;line-height:14px;letter-spacing:-0.8px;color:#000;overflow:visible'><span style='margin-right:0px'>4490</span></div><div class='c' style='left:1349px;top:934px;width:62px;height:16px;font-size:12px;line-height:12px;letter-spacing:1.0px;color:#000;text-indent:1.5px;-webkit-text-stroke:0.15px #000'>ビザスク</div><div class='c' style='left:1412px;top:933px;width:59.4px;height:16px;text-align:right;font-size:14px;line-height:14px;letter-spacing:-0.8px;color:#000;overflow:visible'><span style='margin-right:0px'>4150</span></div><div class='c' style='left:1475px;top:933px;width:59.4px;height:16px;text-align:right;font-size:14px;line-height:14px;letter-spacing:-0.8px;color:#000;overflow:visible'><span style='margin-right:0px'>1.215227</span></div><div class='c' style='left:1286px;top:954px;width:59.4px;height:16px;text-align:right;font-size:14px;line-height:14px;letter-spacing:-0.8px;color:#000;overflow:visible'><span style='margin-right:0px'>7067</span></div><div class='c' style='left:1349px;top:955px;width:62px;height:16px;font-size:12px;line-height:12px;letter-spacing:1.0px;color:#000;text-indent:1.5px;-webkit-text-stroke:0.15px #000'>ブランディア</div><div class='c' style='left:1412px;top:954px;width:59.4px;height:16px;text-align:right;font-size:14px;line-height:14px;letter-spacing:-0.8px;color:#000;overflow:visible'><span style='margin-right:0px'>1381</span></div><div class='c' style='left:1475px;top:954px;width:59.4px;height:16px;text-align:right;font-size:14px;line-height:14px;letter-spacing:-0.8px;color:#000;overflow:visible'><span style='margin-right:0px'>1.2146</span></div><div style='position:absolute;left:654px;top:280px;width:2px;height:693px;background:#000'></div><div style='position:absolute;left:1284px;top:280px;width:2px;height:693px;background:#000'></div><div style='position:absolute;left:1895px;top:258px;width:25px;height:715px;background:#e6e6e6'></div><div style='position:absolute;left:1898px;top:280px;width:19px;height:693px;background:#dadada'></div><div style='position:absolute;left:1898px;top:260px;width:19px;height:19px;background:#fff;border:1px solid #c6c6c6;box-sizing:border-box'></div><svg style='position:absolute;left:1902px;top:266px;' width='11' height='7' viewBox='0 0 11 7'><path d='M0,6 H10 L5,0Z' fill='#777'/></svg><div style='position:absolute;left:1898px;top:952px;width:19px;height:21px;background:#fff;border:1px solid #c6c6c6;box-sizing:border-box'></div><svg style='position:absolute;left:1902px;top:960px;' width='11' height='7' viewBox='0 0 11 7'><path d='M0,0 H10 L5,6Z' fill='#777'/></svg><div style='position:absolute;left:1898px;top:463px;width:19px;height:52px;background:#fff;border:1px solid #c6c6c6;box-sizing:border-box'></div><div style='position:absolute;left:0px;top:973px;width:1920px;height:30px;background:#e6e6e6'></div><div style='position:absolute;left:0px;top:975px;width:1920px;height:1px;background:#c6c6c6'></div><div style='position:absolute;left:0px;top:1002px;width:1920px;height:1px;background:#d0d0d0'></div><svg style='position:absolute;left:27px;top:985px;' width='8' height='10' viewBox='0 0 8 10'><path d='M7,0 V9 L1,4.5Z' fill='#217346'/></svg><svg style='position:absolute;left:55px;top:985px;' width='8' height='10' viewBox='0 0 8 10'><path d='M1,0 V9 L7,4.5Z' fill='#217346'/></svg><div style='position:absolute;left:80px;top:990px;width:2px;height:2px;background:#217346'></div><div style='position:absolute;left:85px;top:990px;width:2px;height:2px;background:#217346'></div><div style='position:absolute;left:90px;top:990px;width:2px;height:2px;background:#217346'></div><div style='position:absolute;left:100px;top:979px;width:1px;height:20px;background:#a6a6a6'></div><div style='position:absolute;left:220px;top:979px;width:1px;height:20px;background:#a6a6a6'></div><div style='position:absolute;left:277px;top:979px;width:1px;height:20px;background:#a6a6a6'></div><div style='position:absolute;left:420px;top:979px;width:1px;height:20px;background:#a6a6a6'></div><div style='position:absolute;left:573px;top:979px;width:1px;height:20px;background:#a6a6a6'></div><div style='position:absolute;left:682px;top:979px;width:1px;height:20px;background:#a6a6a6'></div><div style='position:absolute;left:1094px;top:979px;width:1px;height:20px;background:#a6a6a6'></div><div style='position:absolute;left:103px;top:978px;width:115px;height:22px;background:#ffff00'></div><div style='position:absolute;left:223px;top:978px;width:52px;height:22px;background:#ffff00'></div><div style='position:absolute;left:280px;top:978px;width:138px;height:22px;background:#ffff00'></div><div style='position:absolute;left:576px;top:978px;width:104px;height:22px;background:#ed7d31'></div><div style='position:absolute;left:685px;top:978px;width:70px;height:22px;background:#ed7d31'></div><div style='position:absolute;left:917px;top:978px;width:175px;height:22px;background:#ed7d31'></div><div style='position:absolute;left:1097px;top:978px;width:42px;height:22px;background:#ed7d31'></div><div class='c' style='left:1097px;top:978px;width:42px;height:22px;'><div style='position:absolute;left:7px;top:0px;font-size:16px;line-height:16px;letter-spacing:1px;color:#000;margin-top:0px'>累計</div></div><div style='position:absolute;left:757px;top:975px;width:158px;height:27px;background:linear-gradient(#fff 0%,#fff 55%,#f7dcc8 100%);border:1px solid #b0b0b0;border-bottom:none;box-sizing:border-box'></div><div style='position:absolute;left:757px;top:999px;width:158px;height:2px;background:#217346'></div><div style='position:absolute;left:1147px;top:990px;width:2px;height:2px;background:#217346'></div><div style='position:absolute;left:1152px;top:990px;width:2px;height:2px;background:#217346'></div><div style='position:absolute;left:1157px;top:990px;width:2px;height:2px;background:#217346'></div><svg style='position:absolute;left:1169px;top:978px;' width='23' height='23' viewBox='0 0 23 23'><circle cx='11.5' cy='11.5' r='9.5' fill='none' stroke='#666' stroke-width='1.4'/><path d='M11.5,6.5 V16.5 M6.5,11.5 H16.5' stroke='#666' stroke-width='1.4'/></svg><div style='position:absolute;left:1207px;top:983px;width:2.5px;height:2.5px;background:#999'></div><div style='position:absolute;left:1207px;top:989px;width:2.5px;height:2.5px;background:#999'></div><div style='position:absolute;left:1207px;top:995px;width:2.5px;height:2.5px;background:#999'></div><div style='position:absolute;left:1224px;top:979px;width:670px;height:21px;background:#dadada'></div><div style='position:absolute;left:1224px;top:979px;width:19px;height:21px;background:#fff;border:1px solid #c6c6c6;box-sizing:border-box'></div><svg style='position:absolute;left:1230px;top:985px;' width='7' height='10' viewBox='0 0 7 10'><path d='M6,0 V9 L0,4.5Z' fill='#444'/></svg><div style='position:absolute;left:1875px;top:979px;width:19px;height:21px;background:#fff;border:1px solid #c6c6c6;box-sizing:border-box'></div><svg style='position:absolute;left:1881px;top:985px;' width='7' height='10' viewBox='0 0 7 10'><path d='M0,0 V9 L6,4.5Z' fill='#444'/></svg><div style='position:absolute;left:1417px;top:980px;width:21px;height:19px;background:#fff;border:1px solid #c6c6c6;box-sizing:border-box'></div><div style='position:absolute;left:0px;top:1003px;width:1920px;height:27px;background:#f3f3f3'></div><div style='position:absolute;left:1538px;top:1003px;width:50px;height:27px;background:#d4d4d4'></div><svg style='position:absolute;left:1554px;top:1009px;' width='18' height='16' viewBox='0 0 18 16'><rect x='0.5' y='0.5' width='16' height='14' fill='none' stroke='#666'/><path d='M0.5,5 H16.5 M0.5,10 H16.5 M5.8,0.5 V14.5 M11.2,0.5 V14.5' stroke='#666'/></svg><svg style='position:absolute;left:1603px;top:1009px;' width='18' height='16' viewBox='0 0 18 16'><rect x='0.5' y='0.5' width='16' height='14' fill='none' stroke='#666'/><rect x='3.5' y='3' width='10' height='9' fill='none' stroke='#666'/><path d='M5.5,5.5 H11.5 M5.5,7.5 H11.5 M5.5,9.5 H11.5' stroke='#666'/></svg><svg style='position:absolute;left:1653px;top:1009px;' width='18' height='16' viewBox='0 0 18 16'><path d='M0.5,15 V0.5 H16.5 V15 M5.5,0.5 V8 H11.5 V0.5' fill='none' stroke='#666'/><path d='M0.5,12 H16.5' stroke='#666'/></svg><div style='position:absolute;left:1695px;top:1016px;width:9px;height:1.5px;background:#555'></div><div style='position:absolute;left:1711px;top:1016px;width:124px;height:1px;background:#999'></div><div style='position:absolute;left:1772px;top:1013px;width:1px;height:7px;background:#999'></div><div style='position:absolute;left:1751px;top:1009px;width:6px;height:15px;background:#555'></div><svg style='position:absolute;left:1841px;top:1011px;' width='12' height='12' viewBox='0 0 12 12'><path d='M6,0.5 V11.5 M0.5,6 H11.5' stroke='#555' stroke-width='1.3'/></svg><div style='position:absolute;left:1858px;top:1003px;width:62px;height:27px;background:#dcdcdc'></div><div style='position:absolute;left:0px;top:1030px;width:1920px;height:50px;background:linear-gradient(90deg,#cedce6 0%,#d2e4ea 30%,#cbe9ec 60%,#c9eced 100%)'></div><svg style='position:absolute;left:20px;top:1045px;' width='21' height='21' viewBox='0 0 21 21'><path d='M0,3 L8.5,1.8 V9.6 H0Z M9.8,1.6 L20,0 V9.6 H9.8Z M0,10.8 H8.5 V18.6 L0,17.4Z M9.8,10.8 H20 V20 L9.8,18.6Z' fill='#000'/></svg><div style='position:absolute;left:61px;top:1031px;width:428px;height:49px;background:#fff'></div><svg style='position:absolute;left:74px;top:1044px;' width='22' height='22' viewBox='0 0 22 22'><circle cx='13' cy='9' r='6.3' fill='none' stroke='#000' stroke-width='1.5'/><path d='M8.5,13.5 L1.5,20.5' stroke='#000' stroke-width='1.6'/></svg><svg style='position:absolute;left:508px;top:1045px;' width='22' height='22' viewBox='0 0 22 22'><circle cx='11' cy='11' r='8.5' fill='none' stroke='#000' stroke-width='2.6'/></svg><svg style='position:absolute;left:568px;top:1044px;' width='22' height='22' viewBox='0 0 22 22'><path d='M1,2 H13 M1,20 H13 M3.5,2 V20 M10.5,2 V20 M3.5,6 H10.5 M3.5,16 H10.5' fill='none' stroke='#000' stroke-width='1.4'/><path d='M17.5,1 V5 M17.5,8 V13 M17.5,17 V21' stroke='#000' stroke-width='1.6'/></svg><svg style='position:absolute;left:629px;top:1042px;' width='30' height='26' viewBox='0 0 30 26'><path d='M1,4 H11 L13,7 H29 V24 H1Z' fill='#f0c23b'/><rect x='1' y='9' width='28' height='15' fill='#f6d669'/><rect x='9' y='14' width='12' height='9' fill='#2d7bd5'/><rect x='12' y='18' width='6' height='6' fill='#f6d669'/></svg><svg style='position:absolute;left:690px;top:1039px;' width='31' height='31' viewBox='0 0 31 31'><path d='M10,7 V4 C10,1 21,1 21,4 V7' fill='none' stroke='#333' stroke-width='2.2'/><rect x='1' y='7' width='29' height='23' rx='1.5' fill='#2b2b2b'/><rect x='10' y='12' width='5.2' height='5.2' fill='#f35325'/><rect x='16' y='12' width='5.2' height='5.2' fill='#81bc06'/><rect x='10' y='18' width='5.2' height='5.2' fill='#05a6f0'/><rect x='16' y='18' width='5.2' height='5.2' fill='#ffba08'/></svg><svg style='position:absolute;left:752px;top:1040px;' width='32' height='29' viewBox='0 0 32 29'><path d='M1,11 L16,1 L31,11 V28 H1Z' fill='#0a64c2'/><path d='M5,11 L16,4 L27,11 V16 L16,22 L5,16Z' fill='#fff'/><path d='M1,11 L16,21 L31,11 V28 H1Z' fill='#2196f0'/><path d='M1,28 L16,17 L31,28Z' fill='#48b2f8'/></svg><svg style='position:absolute;left:814px;top:1039px;' width='31' height='31' viewBox='0 0 31 31'><rect x='0' y='0' width='31' height='31' fill='#f05a28'/><circle cx='15.5' cy='15.5' r='11' fill='none' stroke='#fff' stroke-width='2'/><circle cx='15.5' cy='14' r='5' fill='#fff'/><path d='M7,24 C9,19 22,19 24,24' fill='#fff'/></svg><svg style='position:absolute;left:877px;top:1040px;' width='30' height='30' viewBox='0 0 30 30'><rect x='0.5' y='0.5' width='29' height='29' rx='4' fill='#1f57d9'/><rect x='2' y='2' width='26' height='14' rx='3' fill='#4d8bf5' opacity='0.6'/><text x='6' y='19' font-size='19' font-family='Liberation Sans' font-weight='700' fill='#fff'>@</text><text x='4' y='27.5' font-size='7' font-family='Liberation Sans' fill='#fff'>menu</text></svg><svg style='position:absolute;left:939px;top:1040px;' width='31' height='31' viewBox='0 0 31 31'><defs><linearGradient id='eg' x1='0' y1='0' x2='1' y2='0.6'><stop offset='0' stop-color='#3cbdf5'/><stop offset='0.5' stop-color='#2fc5c8'/><stop offset='1' stop-color='#4fd84a'/></linearGradient><linearGradient id='eb' x1='0' y1='0' x2='0' y2='1'><stop offset='0' stop-color='#1591e0'/><stop offset='1' stop-color='#0a6ccc'/></linearGradient></defs><circle cx='15' cy='15' r='15' fill='url(#eg)'/><path d='M15,30 C6.7,30 0,23.3 0,15 C0,11 3,8 8,8 C14,8 19,10.5 21,14 L20.5,20 C15,21 10,22 12,27 C13.5,29 17,29.6 19.5,29.4 C18,29.9 16.5,30.2 15,30.2Z' fill='url(#eb)'/><path d='M19.5,29.4 C12,28.5 7.5,23 8.5,18 C9.5,13.5 13,11.5 16.5,12.5 C13.5,13 12,15.5 13,18.5 C14.5,22 19,23.2 23,23 C25,22.9 26.5,22.4 27.5,22 C26,25.5 23,28.5 19.5,29.4Z' fill='#124f9c'/><path d='M16.5,12.5 C19,13 20.5,15 20,17.5 C20.5,19.5 23,20.5 26,20 C27.3,19.8 28.2,19.5 28.7,19.2 L28.3,21.6 C26.5,22.6 25,22.9 23,23 C19,23.2 14.5,22 13,18.5 C12,15.5 13.5,13 16.5,12.5Z' fill='#d2e5ea'/><circle cx='17.2' cy='16.2' r='3' fill='#d2e5ea'/><path d='M27.5,22 C26,25.5 23,28.5 19.5,29.4 L19,31 H31 V21Z' fill='#d2e5ea'/></svg><svg style='position:absolute;left:1000px;top:1039px;' width='31' height='31' viewBox='0 0 31 31'><rect x='0' y='0' width='31' height='31' fill='#cfe1f5'/><rect x='4' y='6' width='23' height='15' fill='#fff' stroke='#2d7bd5' stroke-width='2'/><path d='M2,24 H29 L27,27 H4Z' fill='#2d7bd5'/><path d='M10,13 L14,17 L21,9' fill='none' stroke='#2d7bd5' stroke-width='2'/></svg><div style='position:absolute;left:1048px;top:1030px;width:61px;height:50px;background:rgba(255,255,255,0.45)'></div><svg style='position:absolute;left:1062px;top:1039px;' width='31' height='31' viewBox='0 0 31 31'><rect x='8' y='1' width='22' height='29' rx='1.5' fill='#21a366'/><rect x='8' y='8' width='22' height='8' fill='#107c41'/><rect x='19' y='1' width='11' height='7' fill='#33c481'/><rect x='8' y='16' width='22' height='7' fill='#185c37' opacity='0.6'/><rect x='1' y='7' width='16' height='16' rx='1.5' fill='#107c41'/><path d='M5,11 L13,19 M13,11 L5,19' stroke='#fff' stroke-width='2.2'/></svg><div style='position:absolute;left:929px;top:1077px;width:51px;height:3px;background:#0078d4'></div><div style='position:absolute;left:991px;top:1077px;width:51px;height:3px;background:#0078d4'></div><div style='position:absolute;left:1048px;top:1077px;width:61px;height:3px;background:#0078d4'></div><svg style='position:absolute;left:1560px;top:1049px;' width='18' height='11' viewBox='0 0 18 11'><polyline points='1,10 9,2 17,10' fill='none' stroke='#000' stroke-width='1.4'/></svg><svg style='position:absolute;left:1587px;top:1045px;' width='24' height='18' viewBox='0 0 24 18'><defs><linearGradient id='cg' x1='0' y1='0' x2='0' y2='1'><stop offset='0' stop-color='#7a7a7a'/><stop offset='0.55' stop-color='#a8a8a8'/><stop offset='0.56' stop-color='#e6e6e6'/><stop offset='1' stop-color='#e6e6e6'/></linearGradient></defs><path d='M6,15.5 C3,15.5 2,13.5 2,11.5 C2,9 4,7.5 6.5,7.5 C7.5,4 10,2.5 13,2.5 C16,2.5 18,4.5 18.5,7 C20.5,7.5 21.5,9.5 21.5,11.5 C21.5,13.5 20,15.5 17.5,15.5Z' fill='url(#cg)' stroke='#333' stroke-width='1.1'/></svg><svg style='position:absolute;left:1617px;top:1043px;' width='24' height='24' viewBox='0 0 24 24'><path d='M2,4 L21,1.5 V18 L16,18.5 M2,4 V20.5 L11,21.5' fill='none' stroke='#222' stroke-width='1.1'/><path d='M7.5,11 C8,8 11,6.5 14,8 M14,8 L13,5.5 M14,8 L11.5,8.5 M15,12.5 C14.5,15 11.5,16.5 9,15 M9,15 L10,17.5 M9,15 L11.5,14.5' fill='none' stroke='#222' stroke-width='1.1'/><circle cx='17.6' cy='17.4' r='4.4' fill='#ff9800'/></svg><svg style='position:absolute;left:1647px;top:1045px;' width='24' height='18' viewBox='0 0 24 18'><path d='M3,1.5 V5 M6,1.5 V5 M2,5 H7 V7.5 C7,9 6,10 4.5,10 C3,10 2,9 2,7.5Z M4.5,10 V16.5' fill='none' stroke='#000' stroke-width='1'/><rect x='6.5' y='6.5' width='15' height='10' fill='none' stroke='#000' stroke-width='1.1'/><rect x='8' y='8' width='12' height='7' fill='#000'/><rect x='21.5' y='9.5' width='1.5' height='4' fill='#000'/></svg><svg style='position:absolute;left:1680px;top:1045px;' width='20' height='18' viewBox='0 0 20 18'><path d='M1.5,16.5 C2.5,9 9,3 17,2.5 M4.5,16.5 C5.5,11 10.5,6.5 17,6 M7.5,16.5 C8.5,13 12.5,10 17,9.5' fill='none' stroke='#222' stroke-width='1.1'/><circle cx='15.5' cy='15.5' r='1.3' fill='#000'/></svg><svg style='position:absolute;left:1707px;top:1044px;' width='22' height='20' viewBox='0 0 22 20'><path d='M1.5,6.5 H5 L10.5,1.5 V18.5 L5,13.5 H1.5Z' fill='none' stroke='#222' stroke-width='1.1'/><path d='M13.5,7 C14.8,8.5 14.8,11.5 13.5,13 M16,4.5 C18.5,7.5 18.5,12.5 16,15.5' fill='none' stroke='#222' stroke-width='1.1'/><path d='M19,2 C22.5,6.5 22.5,13.5 19,18' fill='none' stroke='#999' stroke-width='1'/></svg><svg style='position:absolute;left:1739px;top:1045px;' width='18' height='21' viewBox='0 0 18 21'><path d='M1.5,20 L9,1.5 L16.5,20 M4.5,13 H13.5' fill='none' stroke='#000' stroke-width='1.4'/></svg><svg style='position:absolute;left:1866px;top:1042px;' width='34' height='34' viewBox='0 0 34 34'><path d='M3,3 H23 V19.5 H13 L10,23 V19.5 H3Z' fill='#000'/><path d='M7,7.5 H19 M7,11 H19 M7,14.5 H17' stroke='#fff' stroke-width='1.2'/><circle cx='22.3' cy='22.5' r='9.6' fill='#d6d6d6' fill-opacity='0.92' stroke='#9a9a9a' stroke-width='1'/></svg><div style='position:absolute;left:1914px;top:1030px;width:1px;height:50px;background:#a9c4c8'></div>
<div style='position:absolute;left:867.00px;top:13.00px;-webkit-text-stroke:0.2px #fff;font-family:"Liberation Sans";font-size:14px;line-height:14px;font-weight:400;font-style:normal;color:#fff;letter-spacing:2.000px;white-space:nowrap;'>計算</div><div style='position:absolute;left:896.50px;top:11.00px;font-family:"Liberation Sans";font-size:17px;line-height:17px;font-weight:400;font-style:normal;color:#fff;letter-spacing:-0.500px;white-space:nowrap;'>2020210528</div><div style='position:absolute;left:997.00px;top:10.00px;font-family:"Liberation Sans";font-size:17px;line-height:17px;font-weight:400;font-style:normal;color:#fff;letter-spacing:0.000px;white-space:nowrap;'>-</div><div style='position:absolute;left:1014.00px;top:11.00px;font-family:"Liberation Sans";font-size:17px;line-height:17px;font-weight:400;font-style:normal;color:#fff;letter-spacing:-1.000px;white-space:nowrap;'>Excel</div><div style='position:absolute;left:1379.00px;top:12.00px;font-family:"Liberation Sans";font-size:17px;line-height:17px;font-weight:400;font-style:normal;color:#fff;letter-spacing:-0.200px;white-space:nowrap;'>dryyourtearswithlove1@gmail.com</div><div style='position:absolute;left:1657.00px;top:12.00px;font-family:"Liberation Sans";font-size:13px;line-height:13px;font-weight:400;font-style:normal;color:#666;letter-spacing:0.000px;white-space:nowrap;'>D</div><div style='position:absolute;left:15.00px;top:53.00px;-webkit-text-stroke:0.2px #fff;font-family:"Liberation Sans";font-size:14px;line-height:14px;font-weight:400;font-style:normal;color:#fff;letter-spacing:-1.000px;white-space:nowrap;transform:scaleX(0.8077);transform-origin:1px 0;'>ファイル</div><div style='position:absolute;left:87.00px;top:53.00px;-webkit-text-stroke:0.2px #217346;font-family:"Liberation Sans";font-size:14px;line-height:14px;font-weight:400;font-style:normal;color:#217346;letter-spacing:-1.000px;white-space:nowrap;transform:scaleX(0.9474);transform-origin:1px 0;'>ホーム</div><div style='position:absolute;left:151.00px;top:55.00px;-webkit-text-stroke:0.2px #fff;font-family:"Liberation Sans";font-size:14px;line-height:14px;font-weight:400;font-style:normal;color:#fff;letter-spacing:3.000px;white-space:nowrap;'>挿入</div><div style='position:absolute;left:207.00px;top:53.00px;-webkit-text-stroke:0.2px #fff;font-family:"Liberation Sans";font-size:14px;line-height:14px;font-weight:400;font-style:normal;color:#fff;letter-spacing:-1.000px;white-space:nowrap;transform:scaleX(0.9474);transform-origin:1px 0;'>ページ</div><div style='position:absolute;left:247.50px;top:53.00px;-webkit-text-stroke:0.2px #fff;font-family:"Liberation Sans";font-size:14px;line-height:14px;font-weight:400;font-style:normal;color:#fff;letter-spacing:-1.000px;white-space:nowrap;transform:scaleX(0.8934);transform-origin:2px 0;'>レイアウト</div><div style='position:absolute;left:331.00px;top:55.00px;-webkit-text-stroke:0.2px #fff;font-family:"Liberation Sans";font-size:14px;line-height:14px;font-weight:400;font-style:normal;color:#fff;letter-spacing:1.000px;white-space:nowrap;'>数式</div><div style='position:absolute;left:386.50px;top:53.00px;-webkit-text-stroke:0.2px #fff;font-family:"Liberation Sans";font-size:14px;line-height:14px;font-weight:400;font-style:normal;color:#fff;letter-spacing:-1.000px;white-space:nowrap;transform:scaleX(0.9459);transform-origin:1px 0;'>データ</div><div style='position:absolute;left:449.00px;top:54.00px;-webkit-text-stroke:0.2px #fff;font-family:"Liberation Sans";font-size:14px;line-height:14px;font-weight:400;font-style:normal;color:#fff;letter-spacing:2.000px;white-space:nowrap;'>校閲</div><div style='position:absolute;left:506.00px;top:54.00px;-webkit-text-stroke:0.2px #fff;font-family:"Liberation Sans";font-size:14px;line-height:14px;font-weight:400;font-style:normal;color:#fff;letter-spacing:2.000px;white-space:nowrap;'>表示</div><div style='position:absolute;left:562.50px;top:55.00px;-webkit-text-stroke:0.2px #fff;font-family:"Liberation Sans";font-size:14px;line-height:14px;font-weight:400;font-style:normal;color:#fff;letter-spacing:-1.000px;white-space:nowrap;transform:scaleX(0.9000);transform-origin:0px 0;'>ヘルプ</div><div style='position:absolute;left:662.00px;top:54.00px;-webkit-text-stroke:0.2px #fff;font-family:"Liberation Sans";font-size:14px;line-height:14px;font-weight:400;font-style:normal;color:#fff;letter-spacing:-1.000px;white-space:nowrap;transform:scaleX(0.9241);transform-origin:0px 0;'>何をしますか</div><div style='position:absolute;left:1862.00px;top:55.00px;-webkit-text-stroke:0.2px #fff;font-family:"Liberation Sans";font-size:14px;line-height:14px;font-weight:400;font-style:normal;color:#fff;letter-spacing:2.000px;white-space:nowrap;'>共有</div><div style='position:absolute;left:73.00px;top:180.00px;-webkit-text-stroke:0.2px #444;font-family:"Liberation Sans";font-size:14px;line-height:14px;font-weight:400;font-style:normal;color:#444;letter-spacing:-1.000px;white-space:nowrap;transform:scaleX(0.8409);transform-origin:2px 0;'>クリップボード</div><div style='position:absolute;left:385.00px;top:178.00px;-webkit-text-stroke:0.2px #444;font-family:"Liberation Sans";font-size:14px;line-height:14px;font-weight:400;font-style:normal;color:#444;letter-spacing:-1.000px;white-space:nowrap;transform:scaleX(0.8571);transform-origin:1px 0;'>フォント</div><div style='position:absolute;left:758.00px;top:179.00px;-webkit-text-stroke:0.2px #444;font-family:"Liberation Sans";font-size:14px;line-height:14px;font-weight:400;font-style:normal;color:#444;letter-spacing:2.000px;white-space:nowrap;'>配置</div><div style='position:absolute;left:1049.00px;top:179.00px;-webkit-text-stroke:0.2px #444;font-family:"Liberation Sans";font-size:14px;line-height:14px;font-weight:400;font-style:normal;color:#444;letter-spacing:2.000px;white-space:nowrap;'>数値</div><div style='position:absolute;left:1262.00px;top:178.00px;-webkit-text-stroke:0.2px #444;font-family:"Liberation Sans";font-size:14px;line-height:14px;font-weight:400;font-style:normal;color:#444;letter-spacing:-1.000px;white-space:nowrap;transform:scaleX(0.8462);transform-origin:1px 0;'>スタイル</div><div style='position:absolute;left:1475.00px;top:178.00px;-webkit-text-stroke:0.2px #444;font-family:"Liberation Sans";font-size:14px;line-height:14px;font-weight:400;font-style:normal;color:#444;letter-spacing:-1.000px;white-space:nowrap;transform:scaleX(0.8846);transform-origin:1px 0;'>セル</div><div style='position:absolute;left:1696.00px;top:179.00px;-webkit-text-stroke:0.2px #444;font-family:"Liberation Sans";font-size:14px;line-height:14px;font-weight:400;font-style:normal;color:#444;letter-spacing:3.000px;white-space:nowrap;'>編集</div><div style='position:absolute;left:12.50px;top:133.00px;-webkit-text-stroke:0.2px #262626;font-family:"Liberation Sans";font-size:14px;line-height:14px;font-weight:400;font-style:normal;color:#262626;letter-spacing:-1.000px;white-space:nowrap;transform:scaleX(0.9615);transform-origin:0px 0;'>貼り付け</div><div style='position:absolute;left:94.50px;top:92.00px;-webkit-text-stroke:0.2px #262626;font-family:"Liberation Sans";font-size:14px;line-height:14px;font-weight:400;font-style:normal;color:#262626;letter-spacing:-1.000px;white-space:nowrap;transform:scaleX(0.9500);transform-origin:0px 0;'>切り取り</div><div style='position:absolute;left:92.50px;top:122.00px;-webkit-text-stroke:0.2px #262626;font-family:"Liberation Sans";font-size:14px;line-height:14px;font-weight:400;font-style:normal;color:#262626;letter-spacing:-1.000px;white-space:nowrap;transform:scaleX(0.8514);transform-origin:2px 0;'>コピー</div><div style='position:absolute;left:94.50px;top:150.00px;-webkit-text-stroke:0.2px #262626;font-family:"Liberation Sans";font-size:14px;line-height:14px;font-weight:400;font-style:normal;color:#262626;letter-spacing:-1.000px;white-space:nowrap;transform:scaleX(0.9925);transform-origin:0px 0;'>書式のコピー/貼り付け</div><div style='position:absolute;left:258.70px;top:102.00px;-webkit-text-stroke:0.2px #262626;font-family:"Liberation Sans";font-size:14px;line-height:14px;font-weight:400;font-style:normal;color:#262626;letter-spacing:-1.000px;white-space:nowrap;transform:scaleX(0.9141);transform-origin:0px 0;'>游ゴシック</div><div style='position:absolute;left:474.00px;top:102.50px;font-family:"Liberation Sans";font-size:14px;line-height:14px;font-weight:400;font-style:normal;color:#262626;letter-spacing:3.000px;white-space:nowrap;'>11</div><div style='position:absolute;left:531.00px;top:102.00px;font-family:"Liberation Sans";font-size:14px;line-height:14px;font-weight:700;font-style:normal;color:#555;letter-spacing:0.000px;white-space:nowrap;'>A</div><div style='position:absolute;left:560.00px;top:102.00px;font-family:"Liberation Sans";font-size:14px;line-height:14px;font-weight:700;font-style:normal;color:#555;letter-spacing:0.000px;white-space:nowrap;'>A</div><div style='position:absolute;left:263.50px;top:140.00px;font-family:"Liberation Sans";font-size:16px;line-height:16px;font-weight:700;font-style:normal;color:#444;letter-spacing:0.000px;white-space:nowrap;'>B</div><div style='position:absolute;left:295.50px;top:140.00px;font-family:"Liberation Sans";font-size:16px;line-height:16px;font-weight:700;font-style:italic;color:#444;letter-spacing:0.000px;white-space:nowrap;'>I</div><div style='position:absolute;left:324.00px;top:140.00px;font-family:"Liberation Sans";font-size:16px;line-height:16px;font-weight:700;font-style:normal;color:#444;letter-spacing:0.000px;white-space:nowrap;'>U</div><div style='position:absolute;left:794.00px;top:102.00px;-webkit-text-stroke:0.2px #262626;font-family:"Liberation Sans";font-size:14px;line-height:14px;font-weight:400;font-style:normal;color:#262626;letter-spacing:-0.864px;white-space:nowrap;'>折り返して全体を表示する</div><div style='position:absolute;left:793.00px;top:142.00px;-webkit-text-stroke:0.2px #262626;font-family:"Liberation Sans";font-size:14px;line-height:14px;font-weight:400;font-style:normal;color:#262626;letter-spacing:-0.800px;white-space:nowrap;'>セルを結合して中央揃え</div><div style='position:absolute;left:991.00px;top:102.00px;-webkit-text-stroke:0.2px #262626;font-family:"Liberation Sans";font-size:14px;line-height:14px;font-weight:400;font-style:normal;color:#262626;letter-spacing:2.500px;white-space:nowrap;'>標準</div><div style='position:absolute;left:1042.00px;top:137.00px;font-family:"Liberation Sans";font-size:19px;line-height:19px;font-weight:400;font-style:normal;color:#555;letter-spacing:0.000px;white-space:nowrap;'>%</div><div style='position:absolute;left:1117.00px;top:139.00px;font-family:"Liberation Sans";font-size:10px;line-height:10px;font-weight:400;font-style:normal;color:#555;letter-spacing:0.000px;white-space:nowrap;'>.0</div><div style='position:absolute;left:1111.00px;top:148.00px;font-family:"Liberation Sans";font-size:10px;line-height:10px;font-weight:400;font-style:normal;color:#555;letter-spacing:0.000px;white-space:nowrap;'>.00</div><div style='position:absolute;left:1142.00px;top:139.00px;font-family:"Liberation Sans";font-size:10px;line-height:10px;font-weight:400;font-style:normal;color:#555;letter-spacing:-0.500px;white-space:nowrap;'>.00</div><div style='position:absolute;left:1147.00px;top:148.00px;font-family:"Liberation Sans";font-size:10px;line-height:10px;font-weight:400;font-style:normal;color:#555;letter-spacing:0.000px;white-space:nowrap;'>.0</div><div style='position:absolute;left:1183.00px;top:133.00px;-webkit-text-stroke:0.2px #262626;font-family:"Liberation Sans";font-size:14px;line-height:14px;font-weight:400;font-style:normal;color:#262626;letter-spacing:1.167px;white-space:nowrap;'>条件付き</div><div style='position:absolute;left:1191.00px;top:153.00px;-webkit-text-stroke:0.2px #262626;font-family:"Liberation Sans";font-size:14px;line-height:14px;font-weight:400;font-style:normal;color:#262626;letter-spacing:1.000px;white-space:nowrap;'>書式</div><div style='position:absolute;left:1244.00px;top:133.00px;-webkit-text-stroke:0.2px #262626;font-family:"Liberation Sans";font-size:14px;line-height:14px;font-weight:400;font-style:normal;color:#262626;letter-spacing:-1.000px;white-space:nowrap;transform:scaleX(0.8708);transform-origin:1px 0;'>テーブルとして</div><div style='position:absolute;left:1247.00px;top:153.00px;-webkit-text-stroke:0.2px #262626;font-family:"Liberation Sans";font-size:14px;line-height:14px;font-weight:400;font-style:normal;color:#262626;letter-spacing:1.500px;white-space:nowrap;'>書式設定</div><div style='position:absolute;left:1339.00px;top:132.00px;-webkit-text-stroke:0.2px #262626;font-family:"Liberation Sans";font-size:14px;line-height:14px;font-weight:400;font-style:normal;color:#262626;letter-spacing:-1.000px;white-space:nowrap;transform:scaleX(0.9231);transform-origin:1px 0;'>セルの</div><div style='position:absolute;left:1327.00px;top:151.00px;-webkit-text-stroke:0.2px #262626;font-family:"Liberation Sans";font-size:14px;line-height:14px;font-weight:400;font-style:normal;color:#262626;letter-spacing:-1.000px;white-space:nowrap;transform:scaleX(0.8269);transform-origin:1px 0;'>スタイル</div><div style='position:absolute;left:1421.00px;top:134.00px;-webkit-text-stroke:0.2px #262626;font-family:"Liberation Sans";font-size:14px;line-height:14px;font-weight:400;font-style:normal;color:#262626;letter-spacing:2.000px;white-space:nowrap;'>挿入</div><div style='position:absolute;left:1473.00px;top:133.00px;-webkit-text-stroke:0.2px #262626;font-family:"Liberation Sans";font-size:14px;line-height:14px;font-weight:400;font-style:normal;color:#262626;letter-spacing:3.000px;white-space:nowrap;'>削除</div><div style='position:absolute;left:1525.00px;top:134.00px;-webkit-text-stroke:0.2px #262626;font-family:"Liberation Sans";font-size:14px;line-height:14px;font-weight:400;font-style:normal;color:#262626;letter-spacing:2.000px;white-space:nowrap;'>書式</div><div style='position:absolute;left:1613.00px;top:91.00px;-webkit-text-stroke:0.2px #262626;font-family:"Liberation Sans";font-size:14px;line-height:14px;font-weight:400;font-style:normal;color:#262626;letter-spacing:-0.583px;white-space:nowrap;'>オート SUM</div><div style='position:absolute;left:1613.00px;top:118.50px;-webkit-text-stroke:0.2px #262626;font-family:"Liberation Sans";font-size:14px;line-height:14px;font-weight:400;font-style:normal;color:#262626;letter-spacing:-1.000px;white-space:nowrap;transform:scaleX(0.7692);transform-origin:1px 0;'>フィル</div><div style='position:absolute;left:1612.00px;top:148.50px;-webkit-text-stroke:0.2px #262626;font-family:"Liberation Sans";font-size:14px;line-height:14px;font-weight:400;font-style:normal;color:#262626;letter-spacing:-1.000px;white-space:nowrap;transform:scaleX(0.8108);transform-origin:2px 0;'>クリア</div><div style='position:absolute;left:1719.00px;top:134.00px;-webkit-text-stroke:0.2px #262626;font-family:"Liberation Sans";font-size:14px;line-height:14px;font-weight:400;font-style:normal;color:#262626;letter-spacing:-1.000px;white-space:nowrap;transform:scaleX(0.9921);transform-origin:0px 0;'>並べ替えと</div><div style='position:absolute;left:1716.50px;top:151.50px;-webkit-text-stroke:0.2px #262626;font-family:"Liberation Sans";font-size:14px;line-height:14px;font-weight:400;font-style:normal;color:#262626;letter-spacing:-1.000px;white-space:nowrap;transform:scaleX(0.7891);transform-origin:1px 0;'>フィルター</div><div style='position:absolute;left:1793.00px;top:134.00px;-webkit-text-stroke:0.2px #262626;font-family:"Liberation Sans";font-size:14px;line-height:14px;font-weight:400;font-style:normal;color:#262626;letter-spacing:0.000px;white-space:nowrap;'>検索と</div><div style='position:absolute;left:1789.00px;top:152.50px;-webkit-text-stroke:0.2px #262626;font-family:"Liberation Sans";font-size:14px;line-height:14px;font-weight:400;font-style:normal;color:#262626;letter-spacing:4.000px;white-space:nowrap;'>選択</div><div style='position:absolute;left:13.50px;top:220.00px;font-family:"Liberation Sans";font-size:19px;line-height:19px;font-weight:400;font-style:normal;color:#555;letter-spacing:-0.875px;white-space:nowrap;'>LS131</div><div style='position:absolute;left:274.00px;top:215.00px;font-family:"Liberation Serif";font-size:19px;line-height:19px;font-weight:700;font-style:italic;color:#555;letter-spacing:0.000px;white-space:nowrap;'>f</div><div style='position:absolute;left:282.00px;top:220.00px;font-family:"Liberation Serif";font-size:14px;line-height:14px;font-weight:700;font-style:italic;color:#555;letter-spacing:0.000px;white-space:nowrap;'>x</div><div style='position:absolute;left:325.50px;top:219.00px;font-family:"Liberation Sans";font-size:18px;line-height:18px;font-weight:400;font-style:normal;color:#555;letter-spacing:-0.333px;white-space:nowrap;'>4251</div><div style='position:absolute;left:114.60px;top:976.50px;-webkit-text-stroke:0.2px #000;font-family:"Liberation Sans";font-size:16px;line-height:16px;font-weight:400;font-style:normal;color:#000;letter-spacing:-1.000px;white-space:nowrap;transform:scaleX(0.8476);transform-origin:1px 0;'>サイコロジカル</div><div style='position:absolute;left:232.60px;top:977.00px;font-family:"Liberation Sans";font-size:17px;line-height:17px;font-weight:400;font-style:normal;color:#000;letter-spacing:1.000px;white-space:nowrap;'>RSI</div><div style='position:absolute;left:291.00px;top:977.50px;-webkit-text-stroke:0.2px #000;font-family:"Liberation Sans";font-size:16px;line-height:16px;font-weight:400;font-style:normal;color:#000;letter-spacing:-1.000px;white-space:nowrap;transform:scaleX(0.9538);transform-origin:1px 0;'>エンベロープ指標</div><div style='position:absolute;left:434.00px;top:977.50px;-webkit-text-stroke:0.2px #444;font-family:"Liberation Sans";font-size:16px;line-height:16px;font-weight:400;font-style:normal;color:#444;letter-spacing:-0.429px;white-space:nowrap;'>業種別張り付けば</div><div style='position:absolute;left:585.00px;top:977.50px;-webkit-text-stroke:0.2px #000;font-family:"Liberation Sans";font-size:16px;line-height:16px;font-weight:400;font-style:normal;color:#000;letter-spacing:1.500px;white-space:nowrap;'>業種別株価</div><div style='position:absolute;left:694.50px;top:977.50px;-webkit-text-stroke:0.2px #000;font-family:"Liberation Sans";font-size:16px;line-height:16px;font-weight:400;font-style:normal;color:#000;letter-spacing:0.500px;white-space:nowrap;'>業種別</div><div style='position:absolute;left:927.00px;top:977.50px;-webkit-text-stroke:0.2px #000;font-family:"Liberation Sans";font-size:16px;line-height:16px;font-weight:400;font-style:normal;color:#000;letter-spacing:-0.833px;white-space:nowrap;'>日別と株価による診断</div><div style='position:absolute;left:770.50px;top:977.50px;-webkit-text-stroke:0.2px #217346;font-family:"Liberation Sans";font-size:17px;line-height:17px;font-weight:400;font-style:normal;color:#217346;letter-spacing:0.812px;white-space:nowrap;'>20日騰落上位50</div><div style='position:absolute;left:9.50px;top:1011.00px;-webkit-text-stroke:0.2px #444;font-family:"Liberation Sans";font-size:14px;line-height:14px;font-weight:400;font-style:normal;color:#444;letter-spacing:1.500px;white-space:nowrap;'>準備完了</div><div style='position:absolute;left:1107.00px;top:1009.50px;-webkit-text-stroke:0.2px #444;font-family:"Liberation Sans";font-size:15px;line-height:15px;font-weight:400;font-style:normal;color:#444;letter-spacing:0.714px;white-space:nowrap;'>平均: 2255.744281</div><div style='position:absolute;left:1261.00px;top:1009.50px;-webkit-text-stroke:0.2px #444;font-family:"Liberation Sans";font-size:15px;line-height:15px;font-weight:400;font-style:normal;color:#444;letter-spacing:-1.000px;white-space:nowrap;'>データの個数: 4</div><div style='position:absolute;left:1380.00px;top:1010.50px;-webkit-text-stroke:0.2px #444;font-family:"Liberation Sans";font-size:15px;line-height:15px;font-weight:400;font-style:normal;color:#444;letter-spacing:0.679px;white-space:nowrap;'>合計: 6767.232843</div><div style='position:absolute;left:1867.00px;top:1007.50px;font-family:"Liberation Sans";font-size:15px;line-height:15px;font-weight:400;font-style:normal;color:#444;letter-spacing:1.500px;white-space:nowrap;'>70%</div><div style='position:absolute;left:110.50px;top:1046.00px;-webkit-text-stroke:0.2px #444;font-family:"Liberation Sans";font-size:17px;line-height:17px;font-weight:400;font-style:normal;color:#444;letter-spacing:2.500px;white-space:nowrap;'>検索</div><div style='position:absolute;left:1789.50px;top:1036.00px;font-family:"Liberation Sans";font-size:15px;line-height:15px;font-weight:400;font-style:normal;color:#000;letter-spacing:-0.625px;white-space:nowrap;'>10:05</div><div style='position:absolute;left:1769.00px;top:1058.00px;font-family:"Liberation Sans";font-size:15px;line-height:15px;font-weight:400;font-style:normal;color:#000;letter-spacing:0.167px;white-space:nowrap;'>2021/05/29</div><div style='position:absolute;left:1885.00px;top:1058.00px;font-family:"Liberation Sans";font-size:14px;line-height:14px;font-weight:700;font-style:normal;color:#000;letter-spacing:0.000px;white-space:nowrap;'>2</div>
<div style='position:absolute;left:654px;top:614px;width:255px;height:24px;box-sizing:border-box;border:2px solid #217346'></div><div style='position:absolute;left:904px;top:633px;width:7px;height:7px;background:#fff'></div><div style='position:absolute;left:905px;top:634px;width:5px;height:5px;background:#217346'></div>
</body></html>
